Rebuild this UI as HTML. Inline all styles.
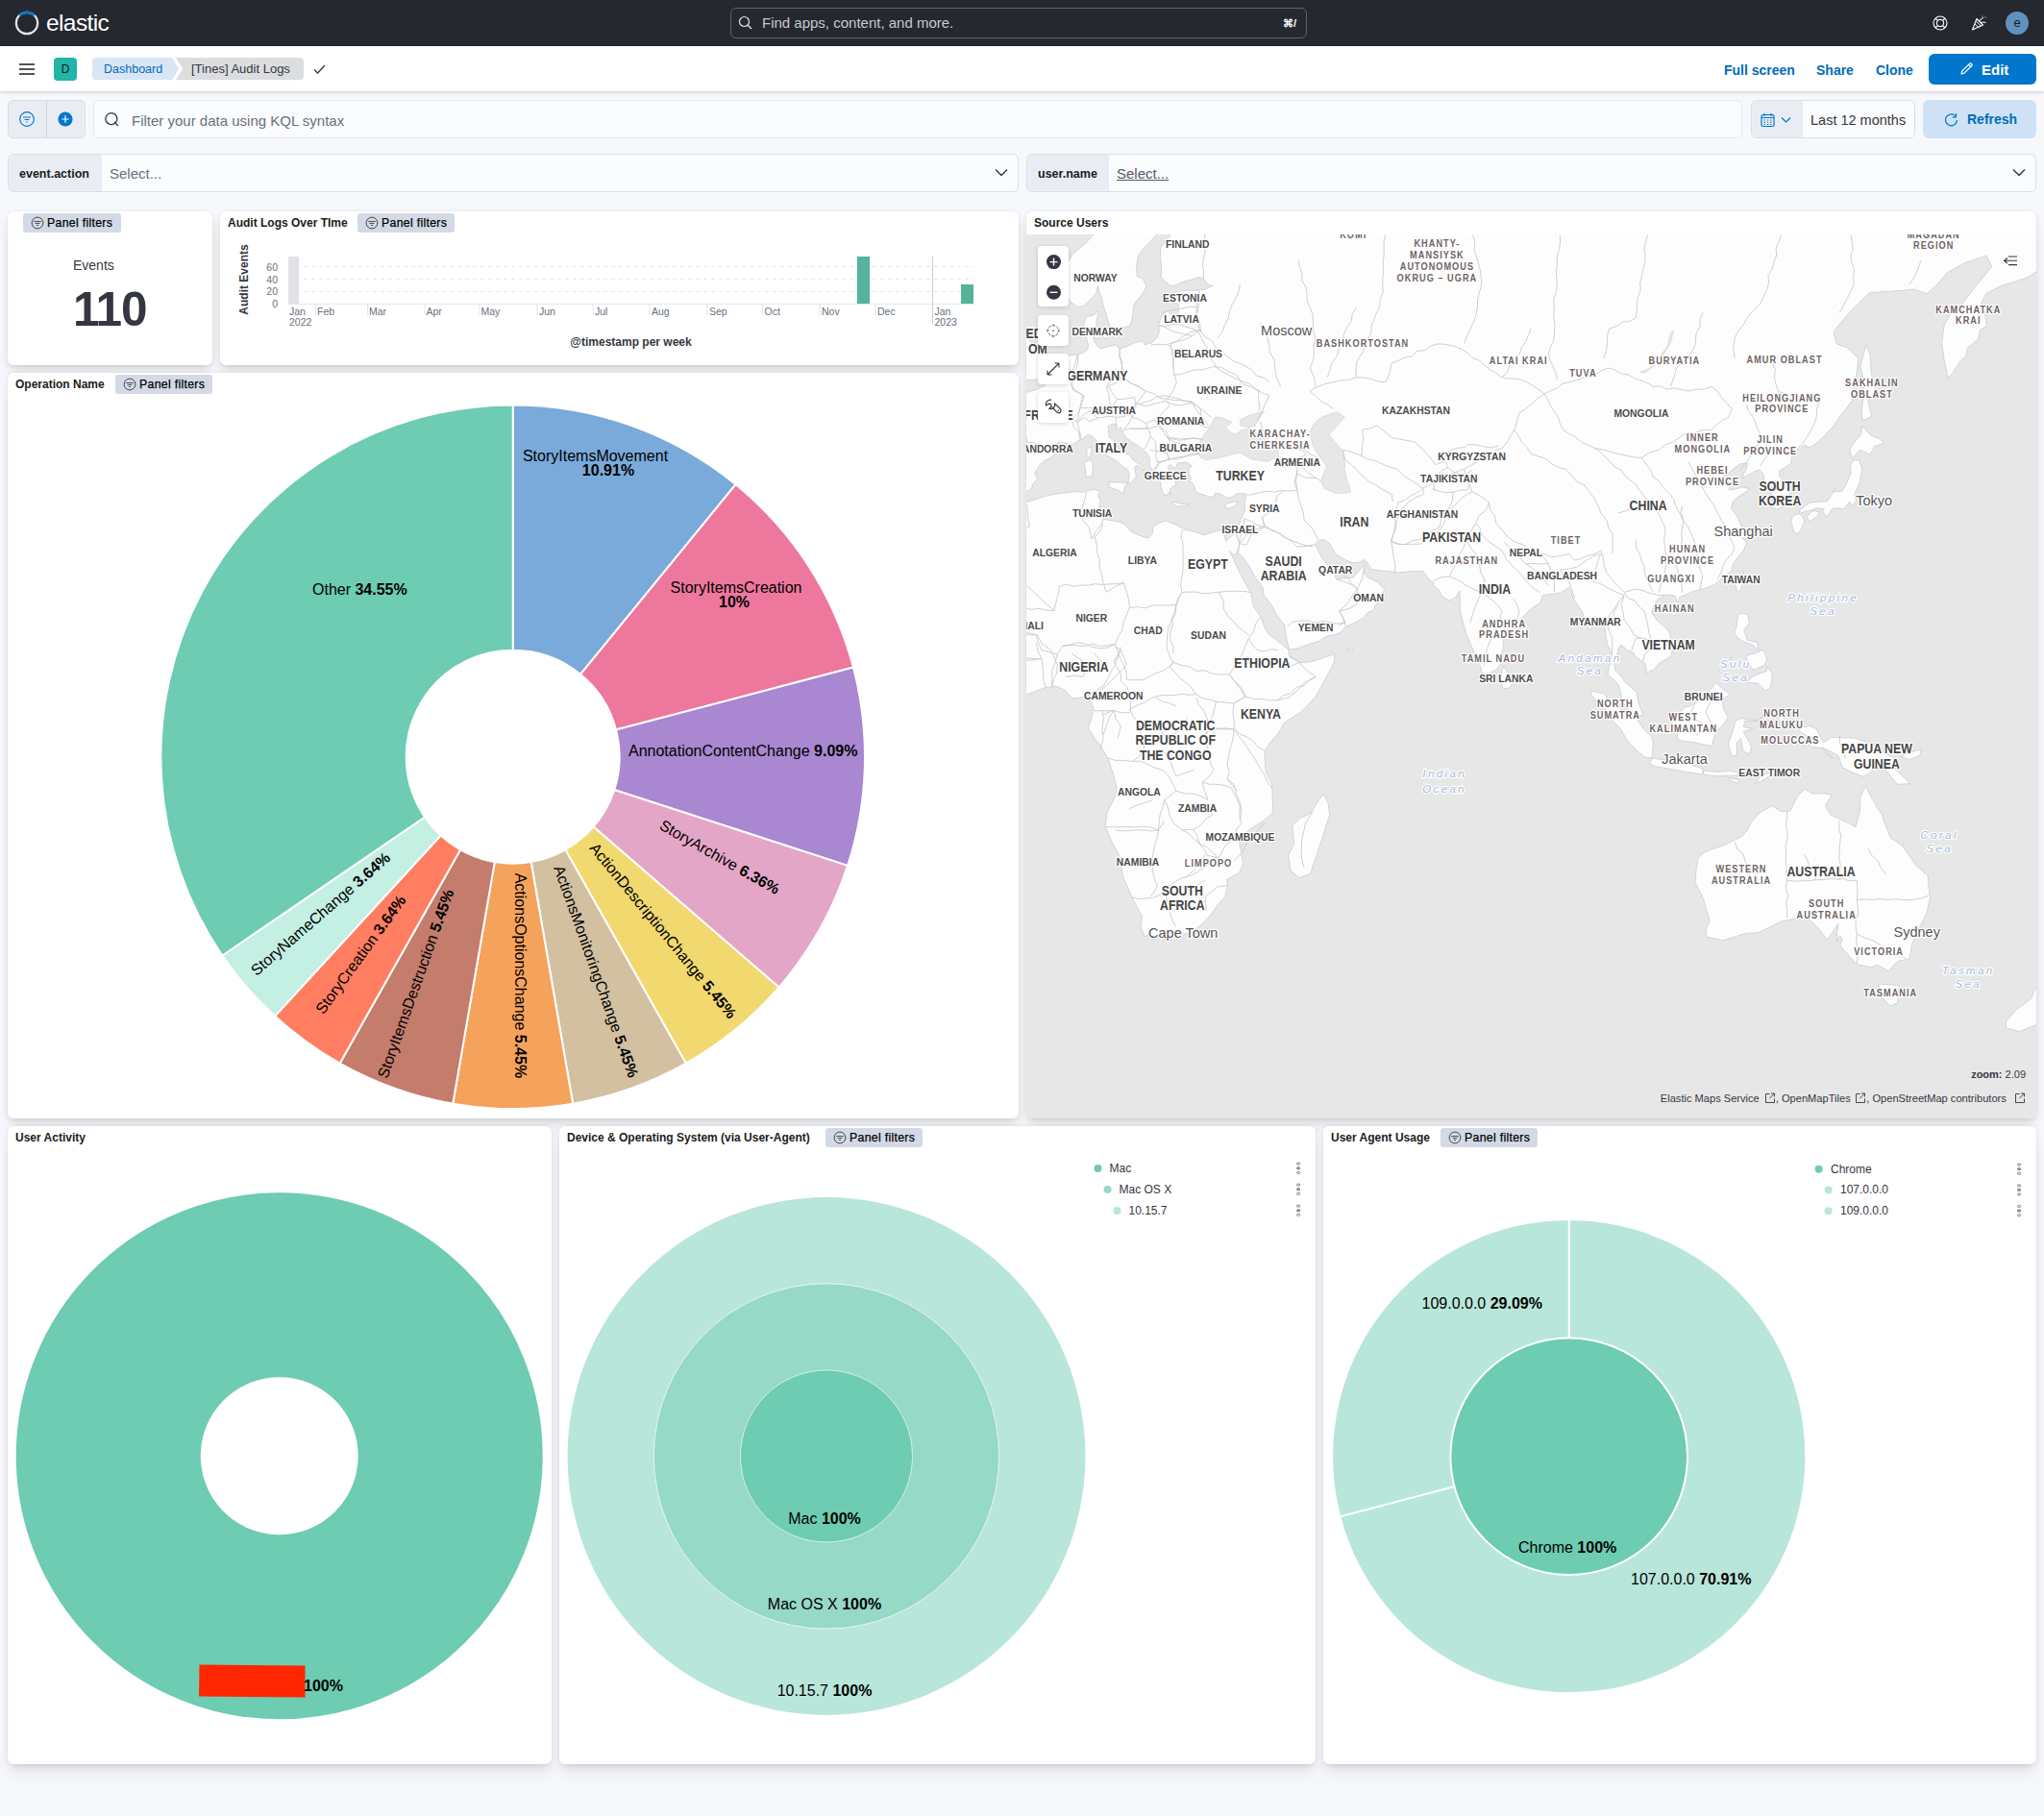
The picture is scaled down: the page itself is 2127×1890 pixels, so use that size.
<!DOCTYPE html><html><head><meta charset="utf-8"><title>[Tines] Audit Logs - Elastic</title><style>
*{box-sizing:border-box;margin:0;padding:0}
html,body{width:2127px;height:1890px;overflow:hidden;background:#f7f8fc;font-family:"Liberation Sans",sans-serif;color:#343741}
.abs{position:absolute}
.hdr{position:absolute;left:0;top:0;width:2127px;height:48px;background:#25282f}
.bc{position:absolute;left:0;top:48px;width:2127px;height:47px;background:#fff;box-shadow:0 1px 2px rgba(0,0,0,.12),0 2px 5px rgba(0,0,0,.06)}
.panel{position:absolute;background:#fff;border-radius:6px;box-shadow:0 0.9px 4px -1px rgba(0,0,0,.08),0 2.6px 8px -1px rgba(0,0,0,.06),0 5.7px 12px -1px rgba(0,0,0,.05),0 15px 15px -1px rgba(0,0,0,.04)}
.ptitle{position:absolute;font-size:12px;font-weight:bold;color:#1a1c21;white-space:nowrap;line-height:14px}
.badge{position:absolute;height:20px;background:#d3dae6;border-radius:3px;font-size:12px;color:#000;line-height:20px;white-space:nowrap}
.badge svg{position:absolute;left:8px;top:3px}
.badge span{position:absolute;left:25px;top:0;letter-spacing:0.3px;-webkit-text-stroke:0.25px #000;font-size:12.3px}
.t{position:absolute;white-space:nowrap}
</style></head><body>
<div class="hdr">
<svg class="abs" style="left:14px;top:10px" width="28" height="28" viewBox="0 0 28 28"><circle cx="14" cy="14" r="11.2" fill="none" stroke="#dfe5ef" stroke-width="2.2"/><path d="M6.08 6.08 A11.2 11.2 0 0 1 21.92 6.08" fill="none" stroke="#0077cc" stroke-width="2.4"/></svg>
<div class="t" style="left:48px;top:10px;font-size:24.5px;color:#fff;letter-spacing:-0.6px;line-height:28px">elastic</div>
<div class="abs" style="left:760px;top:8px;width:600px;height:32px;border:1px solid #5f636b;border-radius:6px;background:#25282f"></div>
<svg class="abs" style="left:768px;top:16px" width="16" height="16" viewBox="0 0 16 16"><circle cx="6.5" cy="6.5" r="5" fill="none" stroke="#dfe5ef" stroke-width="1.2"/><path d="M10.2 10.2 L14 14" stroke="#dfe5ef" stroke-width="1.3"/></svg>
<div class="t" style="left:793px;top:15px;font-size:15px;color:#c6cad1;line-height:17px">Find apps, content, and more.</div>
<div class="t" style="left:1335px;top:17px;font-size:11px;color:#fff;font-weight:bold;line-height:14px">&#8984;/</div>
<svg class="abs" style="left:2011px;top:16px" width="16" height="16" viewBox="0 0 16 16"><circle cx="8" cy="8" r="7" fill="none" stroke="#fff" stroke-width="1.1"/><circle cx="8" cy="8" r="3.6" fill="none" stroke="#fff" stroke-width="1.1"/><path d="M3 3L5.4 5.4M13 3L10.6 5.4M3 13L5.4 10.6M13 13L10.6 10.6" stroke="#fff" stroke-width="1.1"/></svg>
<svg class="abs" style="left:2051px;top:16px" width="17" height="16" viewBox="0 0 17 16"><path d="M1.5 15 L6 3.5 L12.5 10 Z" fill="none" stroke="#fff" stroke-width="1.1" stroke-linejoin="round"/><path d="M4 9 L8.5 13M5.2 6 L10.5 11.2" stroke="#fff" stroke-width="1"/><path d="M9 6 Q10 3 13 2.5M10.5 7.5 Q13 6.5 15.5 7.5" fill="none" stroke="#fff" stroke-width="1"/><circle cx="15" cy="2" r=".6" fill="#fff"/><circle cx="12" cy="1" r=".5" fill="#fff"/></svg>
<div class="abs" style="left:2087px;top:12px;width:24px;height:24px;border-radius:12px;background:#6092c0;color:#1a1c21;font-size:13px;text-align:center;line-height:24px">e</div>
</div>
<div class="bc">
<svg class="abs" style="left:20px;top:18px" width="16" height="12" viewBox="0 0 16 12"><path d="M0 1H16M0 6H16M0 11H16" stroke="#1a1c21" stroke-width="1.6"/></svg>
<div class="abs" style="left:56px;top:12px;width:24px;height:24px;border-radius:4px;background:#20b5a6;color:#1a1c21;font-size:12px;text-align:center;line-height:24px">D</div>
<svg class="abs" style="left:96px;top:12px" width="222" height="24" viewBox="0 0 222 24"><path d="M4 0H83L90 11.6L83 23.2H4Q0 23.2 0 19.2V4Q0 0 4 0Z" fill="#d9e6f5"/><path d="M87 0H216Q220 0 220 4V19.2Q220 23.2 216 23.2H87L94 11.6Z" fill="#dcdde0"/></svg>
<div class="t" style="left:108px;top:16px;font-size:12.5px;color:#006bb8;line-height:16px">Dashboard</div>
<div class="t" style="left:199px;top:16px;font-size:13px;color:#343741;line-height:16px">[Tines] Audit Logs</div>
<svg class="abs" style="left:326px;top:19px" width="13" height="10" viewBox="0 0 13 10"><path d="M1 5.5L4.5 9L12 1" fill="none" stroke="#343741" stroke-width="1.3"/></svg>
<div class="t" style="left:1794px;top:16.5px;font-size:14px;font-weight:bold;color:#006bb8;line-height:17px">Full screen</div>
<div class="t" style="left:1890px;top:16.5px;font-size:14px;font-weight:bold;color:#006bb8;line-height:17px">Share</div>
<div class="t" style="left:1952px;top:16.5px;font-size:14px;font-weight:bold;color:#006bb8;line-height:17px">Clone</div>
<div class="abs" style="left:2007px;top:8px;width:112px;height:32px;border-radius:6px;background:#0077cc"></div>
<svg class="abs" style="left:2039px;top:16px" width="15" height="15" viewBox="0 0 15 15"><path d="M2 13L2.8 10L10.5 2.3Q11.5 1.3 12.5 2.3L12.7 2.5Q13.7 3.5 12.7 4.5L5 12.2Z M9.5 3.3L11.7 5.5" fill="none" stroke="#fff" stroke-width="1.2" stroke-linejoin="round"/></svg>
<div class="t" style="left:2062px;top:16px;font-size:15px;font-weight:bold;color:#fff;line-height:17px">Edit</div>
</div>
<div class="abs" style="left:8px;top:104px;width:81px;height:40px;border:1px solid #d6dce7;border-radius:6px;background:#e9edf3"></div>
<div class="abs" style="left:48px;top:105px;width:1px;height:38px;background:#d0d6e1"></div>
<svg class="abs" style="left:20px;top:116px" width="17" height="17" viewBox="0 0 17 17"><circle cx="8" cy="8" r="7.3" fill="none" stroke="#0077cc" stroke-width="1.2"/><path d="M4 6H12M5.5 8.5H10.5M7.3 11H8.7" stroke="#0077cc" stroke-width="1.2"/></svg>
<svg class="abs" style="left:60px;top:116px" width="17" height="17" viewBox="0 0 17 17"><circle cx="8" cy="8" r="7.6" fill="#0077cc"/><path d="M8 4.3V11.7M4.3 8H11.7" stroke="#fff" stroke-width="1.2"/></svg>
<div class="abs" style="left:97px;top:104px;width:1716px;height:40px;border:1px solid #e3e8f0;border-radius:6px;background:#fbfcfd"></div>
<svg class="abs" style="left:108px;top:116px" width="17" height="17" viewBox="0 0 17 17"><path d="M12 12A6 6 0 1 1 12.3 11.7" fill="none" stroke="#343741" stroke-width="1.2"/><path d="M11 11L15 15" stroke="#343741" stroke-width="1.2"/></svg>
<div class="t" style="left:137px;top:117px;font-size:15px;color:#69707d;line-height:17px">Filter your data using KQL syntax</div>
<div class="abs" style="left:1822px;top:104px;width:171px;height:40px;border:1px solid #d9dfe8;border-radius:6px;background:#fbfcfd;overflow:hidden"><div class="abs" style="left:0;top:0;width:53px;height:38px;background:#e9edf3"></div></div>
<svg class="abs" style="left:1832px;top:117px" width="15" height="16" viewBox="0 0 15 16"><rect x="1" y="2.5" width="13" height="12" rx="1.5" fill="none" stroke="#0077cc" stroke-width="1.2"/><path d="M1 5.5H14M4 1V4M11 1V4" stroke="#0077cc" stroke-width="1.2"/><path d="M3.5 8H5M6.8 8H8.3M10 8H11.5M3.5 10.3H5M6.8 10.3H8.3M10 10.3H11.5M3.5 12.5H5M6.8 12.5H8.3M10 12.5H11.5" stroke="#0077cc" stroke-width="1.1"/></svg>
<svg class="abs" style="left:1853px;top:121px" width="11" height="8" viewBox="0 0 11 8"><path d="M1 1.5L5.5 6L10 1.5" fill="none" stroke="#0077cc" stroke-width="1.2"/></svg>
<div class="t" style="left:1884px;top:117px;font-size:14.5px;color:#343741;line-height:17px">Last 12 months</div>
<div class="abs" style="left:2001px;top:104px;width:118px;height:40px;border-radius:6px;background:#cfe2f5"></div>
<svg class="abs" style="left:2023px;top:117px" width="15" height="15" viewBox="0 0 15 15"><path d="M12.5 4.5A6 6 0 1 0 13.5 8" fill="none" stroke="#0077cc" stroke-width="1.2"/><path d="M12.5 1V4.8H8.8" fill="none" stroke="#0077cc" stroke-width="1.2"/></svg>
<div class="t" style="left:2047px;top:116px;font-size:14px;font-weight:bold;color:#006bb8;line-height:17px">Refresh</div>
<div class="abs" style="left:8px;top:160px;width:1052px;height:40px;border:1px solid #d9dfe8;border-radius:6px;background:#fbfcfd;overflow:hidden"><div class="abs" style="left:0;top:0;width:97px;height:38px;background:#e9edf3"></div></div>
<div class="t" style="left:20px;top:173.5px;font-size:12.5px;font-weight:bold;color:#1a1c21;line-height:15px">event.action</div>
<div class="t" style="left:114px;top:172px;font-size:15px;color:#69707d;line-height:17px">Select...</div>
<svg class="abs" style="left:1035px;top:175px" width="14" height="9" viewBox="0 0 14 9"><path d="M1 1.5L7 7.5L13 1.5" fill="none" stroke="#343741" stroke-width="1.4"/></svg>
<div class="abs" style="left:1068px;top:160px;width:1051px;height:40px;border:1px solid #d9dfe8;border-radius:6px;background:#fbfcfd;overflow:hidden"><div class="abs" style="left:0;top:0;width:85px;height:38px;background:#e9edf3"></div></div>
<div class="t" style="left:1080px;top:173.5px;font-size:12.5px;font-weight:bold;color:#1a1c21;line-height:15px">user.name</div>
<div class="t" style="left:1162px;top:172px;font-size:15px;text-decoration:underline;color:#535966;line-height:17px">Select...</div>
<svg class="abs" style="left:2094px;top:175px" width="14" height="9" viewBox="0 0 14 9"><path d="M1 1.5L7 7.5L13 1.5" fill="none" stroke="#343741" stroke-width="1.4"/></svg>
<div class="panel" style="left:8px;top:220px;width:213px;height:160px"></div>
<div class="panel" style="left:229px;top:220px;width:831px;height:160px"></div>
<div class="panel" style="left:1068px;top:220px;width:1051px;height:944px"></div>
<div class="panel" style="left:8px;top:388px;width:1052px;height:776px"></div>
<div class="panel" style="left:8px;top:1172px;width:566px;height:664px"></div>
<div class="panel" style="left:582px;top:1172px;width:787px;height:664px"></div>
<div class="panel" style="left:1377px;top:1172px;width:742px;height:664px"></div>
<div class="badge" style="left:24px;top:222px;width:102px"><svg width="14" height="14" viewBox="0 0 14 14"><circle cx="7" cy="7" r="5.9" fill="none" stroke="#343741" stroke-width="0.9"/><path d="M3.2 5.5H10.8M4.6 7.5H9.4M6 9.5H8" stroke="#343741" stroke-width="0.85"/></svg><span>Panel filters</span></div>
<div class="t" style="left:76px;top:268px;font-size:14px;color:#343741;line-height:17px">Events</div>
<div class="t" style="left:76px;top:295px;font-size:49.5px;font-weight:bold;color:#343741;line-height:54px;letter-spacing:-1.2px">110</div>
<div class="ptitle" style="left:237px;top:225px">Audit Logs Over TIme</div>
<div class="badge" style="left:372px;top:222px;width:101px"><svg width="14" height="14" viewBox="0 0 14 14"><circle cx="7" cy="7" r="5.9" fill="none" stroke="#343741" stroke-width="0.9"/><path d="M3.2 5.5H10.8M4.6 7.5H9.4M6 9.5H8" stroke="#343741" stroke-width="0.85"/></svg><span>Panel filters</span></div>
<svg class="abs" style="left:229px;top:244px" width="831" height="130" viewBox="229 244 831 130"><path d="M300 277.5H1013" stroke="#e3e6eb" stroke-width="1" stroke-dasharray="4 4"/><path d="M300 290.5H1013" stroke="#e3e6eb" stroke-width="1" stroke-dasharray="4 4"/><path d="M300 303.5H1013" stroke="#e3e6eb" stroke-width="1" stroke-dasharray="4 4"/><path d="M300 316.5H1013" stroke="#e6e9ee" stroke-width="1"/><rect x="300" y="267" width="11" height="49" fill="#e0e2e6"/><rect x="892" y="267" width="13" height="49" fill="#54b399"/><rect x="1000" y="296" width="13" height="20" fill="#54b399"/><path d="M328.5 317V328" stroke="#dfe3e8" stroke-width="1"/><path d="M382.5 317V328" stroke="#dfe3e8" stroke-width="1"/><path d="M442 317V328" stroke="#dfe3e8" stroke-width="1"/><path d="M499 317V328" stroke="#dfe3e8" stroke-width="1"/><path d="M559 317V328" stroke="#dfe3e8" stroke-width="1"/><path d="M617 317V328" stroke="#dfe3e8" stroke-width="1"/><path d="M676 317V328" stroke="#dfe3e8" stroke-width="1"/><path d="M736 317V328" stroke="#dfe3e8" stroke-width="1"/><path d="M793.5 317V328" stroke="#dfe3e8" stroke-width="1"/><path d="M853 317V328" stroke="#dfe3e8" stroke-width="1"/><path d="M911 317V328" stroke="#dfe3e8" stroke-width="1"/><path d="M970.5 267V338" stroke="#c9ccd2" stroke-width="1"/><text x="289" y="281.5" text-anchor="end" font-size="10.5" fill="#69707d">60</text><text x="289" y="294.5" text-anchor="end" font-size="10.5" fill="#69707d">40</text><text x="289" y="307" text-anchor="end" font-size="10.5" fill="#69707d">20</text><text x="289" y="319.5" text-anchor="end" font-size="10.5" fill="#69707d">0</text><text x="301" y="328" font-size="10.5" fill="#69707d">Jan</text><text x="330" y="328" font-size="10.5" fill="#69707d">Feb</text><text x="384" y="328" font-size="10.5" fill="#69707d">Mar</text><text x="443.5" y="328" font-size="10.5" fill="#69707d">Apr</text><text x="500.5" y="328" font-size="10.5" fill="#69707d">May</text><text x="561" y="328" font-size="10.5" fill="#69707d">Jun</text><text x="619" y="328" font-size="10.5" fill="#69707d">Jul</text><text x="678" y="328" font-size="10.5" fill="#69707d">Aug</text><text x="738" y="328" font-size="10.5" fill="#69707d">Sep</text><text x="795.5" y="328" font-size="10.5" fill="#69707d">Oct</text><text x="855" y="328" font-size="10.5" fill="#69707d">Nov</text><text x="913" y="328" font-size="10.5" fill="#69707d">Dec</text><text x="972.5" y="328" font-size="10.5" fill="#69707d">Jan</text><text x="301" y="338.5" font-size="10.5" fill="#69707d">2022</text><text x="972.5" y="338.5" font-size="10.5" fill="#69707d">2023</text><text transform="translate(257.5,291) rotate(-90)" text-anchor="middle" font-size="12" font-weight="bold" fill="#343741">Audit Events</text><text x="656.5" y="360" text-anchor="middle" font-size="12" font-weight="bold" fill="#343741">@timestamp per week</text></svg>
<div class="ptitle" style="left:16px;top:393px">Operation Name</div>
<div class="badge" style="left:120px;top:390px;width:101px"><svg width="14" height="14" viewBox="0 0 14 14"><circle cx="7" cy="7" r="5.9" fill="none" stroke="#343741" stroke-width="0.9"/><path d="M3.2 5.5H10.8M4.6 7.5H9.4M6 9.5H8" stroke="#343741" stroke-width="0.85"/></svg><span>Panel filters</span></div>
<svg class="abs" style="left:8px;top:410px" width="1052" height="754" viewBox="8 410 1052 754" font-family="Liberation Sans, sans-serif"><path d="M533.70 421.40A366.3 366.3 0 0 1 765.57 504.13L603.96 701.77A111 111 0 0 0 533.70 676.70Z" fill="#79aad9" stroke="#fff" stroke-width="2" stroke-linejoin="round"/><path d="M765.57 504.13A366.3 366.3 0 0 1 887.97 694.58L641.05 759.48A111 111 0 0 0 603.96 701.77Z" fill="#ee789d" stroke="#fff" stroke-width="2" stroke-linejoin="round"/><path d="M887.97 694.58A366.3 366.3 0 0 1 882.07 900.89L639.27 822.00A111 111 0 0 0 641.05 759.48Z" fill="#a987d1" stroke="#fff" stroke-width="2" stroke-linejoin="round"/><path d="M882.07 900.89A366.3 366.3 0 0 1 810.53 1027.58L617.59 860.39A111 111 0 0 0 639.27 822.00Z" fill="#e4a6c7" stroke="#fff" stroke-width="2" stroke-linejoin="round"/><path d="M810.53 1027.58A366.3 366.3 0 0 1 713.82 1106.65L588.28 884.35A111 111 0 0 0 617.59 860.39Z" fill="#f1d86f" stroke="#fff" stroke-width="2" stroke-linejoin="round"/><path d="M713.82 1106.65A366.3 366.3 0 0 1 596.16 1148.64L552.63 897.07A111 111 0 0 0 588.28 884.35Z" fill="#d2c0a0" stroke="#fff" stroke-width="2" stroke-linejoin="round"/><path d="M596.16 1148.64A366.3 366.3 0 0 1 471.24 1148.64L514.77 897.07A111 111 0 0 0 552.63 897.07Z" fill="#f5a35c" stroke="#fff" stroke-width="2" stroke-linejoin="round"/><path d="M471.24 1148.64A366.3 366.3 0 0 1 353.58 1106.65L479.12 884.35A111 111 0 0 0 514.77 897.07Z" fill="#c47c6c" stroke="#fff" stroke-width="2" stroke-linejoin="round"/><path d="M353.58 1106.65A366.3 366.3 0 0 1 286.02 1057.57L458.64 869.48A111 111 0 0 0 479.12 884.35Z" fill="#ff7e62" stroke="#fff" stroke-width="2" stroke-linejoin="round"/><path d="M286.02 1057.57A366.3 366.3 0 0 1 231.33 994.46L442.07 850.35A111 111 0 0 0 458.64 869.48Z" fill="#c4efe3" stroke="#fff" stroke-width="2" stroke-linejoin="round"/><path d="M231.33 994.46A366.3 366.3 0 0 1 533.70 421.40L533.70 676.70A111 111 0 0 0 442.07 850.35Z" fill="#6dccb1" stroke="#fff" stroke-width="2" stroke-linejoin="round"/><text x="619.5" y="479.6" text-anchor="middle" font-size="16" fill="#000">StoryItemsMovement</text><text x="633" y="495.2" text-anchor="middle" font-size="16" font-weight="bold" fill="#000">10.91%</text><text x="766" y="616.6" text-anchor="middle" font-size="16" fill="#000">StoryItemsCreation</text><text x="764" y="632.4" text-anchor="middle" font-size="16" font-weight="bold" fill="#000">10%</text><text x="654" y="786.6" font-size="16" fill="#000">AnnotationContentChange <tspan font-weight="bold">9.09%</tspan></text><text x="325" y="618.8" font-size="16" fill="#000">Other <tspan font-weight="bold">34.55%</tspan></text><text transform="translate(749.2,891.7) rotate(29.45)" y="5.85" text-anchor="middle" font-size="16" fill="#000">StoryArchive <tspan font-weight="bold">6.36%</tspan></text><text transform="translate(690.3,968.4) rotate(50.73)" y="5.85" text-anchor="middle" font-size="16" fill="#000">ActionDescriptionChange <tspan font-weight="bold">5.45%</tspan></text><text transform="translate(620.7,1010.9) rotate(70.36)" y="5.85" text-anchor="middle" font-size="16" fill="#000">ActionsMonitoringChange <tspan font-weight="bold">5.45%</tspan></text><text transform="translate(541.6,1015.4) rotate(90)" y="5.85" text-anchor="middle" font-size="16" fill="#000">ActionsOptionsChange <tspan font-weight="bold">5.45%</tspan></text><text transform="translate(432.2,1023.8) rotate(-70.36)" y="5.85" text-anchor="middle" font-size="16" fill="#000">StoryItemsDestruction <tspan font-weight="bold">5.45%</tspan></text><text transform="translate(375.1,993.3) rotate(-54)" y="5.85" text-anchor="middle" font-size="16" fill="#000">StoryCreation <tspan font-weight="bold">3.64%</tspan></text><text transform="translate(333.3,950.9) rotate(-40.91)" y="5.85" text-anchor="middle" font-size="16" fill="#000">StoryNameChange <tspan font-weight="bold">3.64%</tspan></text></svg>
<div class="ptitle" style="left:1076px;top:225px">Source Users</div>
<svg class="abs" style="left:1068px;top:244px" width="1051" height="920" viewBox="1068 244 1051 920" font-family="Liberation Sans, sans-serif"><defs><clipPath id="mc"><path d="M1068 244H2119V1158Q2119 1164 2113 1164H1074Q1068 1164 1068 1158Z"/></clipPath></defs><g clip-path="url(#mc)"><rect x="1068" y="244" width="1051" height="920" fill="#e7e7e7"/><path d="M1102.7 113.8L1140.3 241.7L1130.0 252.7L1116.0 264.7L1108.2 277.6L1108.8 291.3L1110.6 304.5L1112.4 312.8L1120.9 319.7L1127.5 318.5L1134.8 311.6L1140.3 305.7L1142.7 297.4L1144.5 305.7L1146.3 309.3L1147.5 316.2L1149.9 323.1L1152.4 332.0L1154.8 339.7L1156.6 346.2L1158.4 348.4L1164.5 348.4L1167.5 340.8L1174.8 339.7L1177.8 334.3L1179.0 325.3L1180.2 316.2L1185.1 310.4L1189.9 304.5L1192.9 297.4L1189.3 290.0L1183.3 287.6L1182.6 276.3L1184.5 266.0L1189.3 259.4L1198.4 250.0L1205.7 241.7L1213.5 221.7L1229.9 113.8ZM1229.9 223.2L1220.2 241.7L1213.5 250.0L1207.5 258.0L1207.5 268.6L1208.7 277.6L1208.1 288.8L1212.3 292.5L1217.2 297.4L1222.6 297.4L1229.9 293.7L1239.0 291.3L1246.8 288.8L1252.3 290.0L1257.1 296.1L1262.0 297.4L1254.1 301.0L1245.0 302.2L1234.7 302.2L1226.8 303.3L1220.8 305.7L1220.2 310.4L1221.4 315.1L1226.2 316.2L1226.2 324.2L1224.4 330.9L1218.4 327.6L1215.3 323.1L1208.7 328.7L1205.7 337.6L1206.3 345.1L1205.0 350.5L1200.8 354.7L1197.8 356.8L1191.1 358.9L1189.3 354.7L1180.2 356.8L1174.2 359.9L1165.1 363.0L1160.8 358.9L1152.4 361.0L1145.1 363.0L1140.9 358.9L1138.4 354.7L1137.2 347.3L1140.9 339.7L1140.9 335.4L1142.1 329.8L1142.7 323.1L1138.4 327.6L1130.6 329.8L1128.2 335.4L1127.5 341.9L1128.2 347.3L1130.6 352.6L1132.4 358.9L1131.8 364.1L1127.5 367.1L1120.9 369.2L1116.0 369.2L1108.8 371.2L1106.4 378.2L1103.3 384.1L1099.1 389.0L1093.6 391.9L1088.8 393.8L1088.2 400.5L1079.7 405.2L1069.4 408.0L1049.4 415.4L1063.4 429.8L1068.8 459.9L1030.1 459.9L1024.0 511.6L1044.6 519.1L1065.8 513.8L1073.7 507.8L1074.9 503.9L1079.7 497.7L1076.7 492.3L1081.5 484.4L1087.0 479.6L1091.8 477.2L1097.9 473.1L1097.3 468.2L1097.9 462.4L1102.7 459.9L1110.6 461.6L1115.4 463.3L1121.5 459.1L1126.9 456.6L1132.4 452.4L1137.8 454.9L1140.9 459.1L1142.7 464.9L1146.3 469.0L1153.0 474.7L1160.8 478.8L1164.5 482.0L1168.7 486.0L1173.0 488.3L1175.4 493.1L1174.8 498.5L1173.6 504.3L1178.4 500.8L1182.0 497.0L1182.0 493.1L1180.8 486.0L1183.3 484.4L1187.5 486.8L1189.9 489.9L1190.5 486.8L1186.9 483.6L1179.0 478.8L1176.0 473.1L1169.9 471.5L1164.5 467.4L1160.8 459.9L1154.2 454.9L1153.6 448.1L1153.0 443.8L1157.8 441.2L1162.1 442.1L1162.1 448.1L1166.3 444.7L1168.7 450.7L1171.1 454.9L1177.8 459.9L1184.5 464.1L1188.7 467.4L1194.2 472.3L1196.6 478.0L1196.0 484.4L1200.2 490.7L1203.8 497.0L1207.5 501.6L1208.1 507.0L1209.9 513.1L1214.1 516.1L1216.6 512.3L1218.4 515.3L1217.2 509.3L1220.8 506.2L1223.8 504.7L1223.2 500.8L1219.6 495.4L1217.2 491.5L1215.3 486.8L1217.2 483.6L1223.2 487.6L1225.6 482.0L1232.9 481.2L1236.5 482.0L1240.2 485.2L1237.1 488.3L1237.1 493.1L1239.6 498.5L1237.7 500.8L1242.6 504.7L1243.8 510.8L1248.0 513.8L1255.9 516.1L1259.5 517.6L1263.2 516.8L1264.4 513.1L1271.0 514.6L1276.5 518.3L1281.9 517.6L1285.6 514.6L1289.2 513.1L1294.1 513.8L1297.7 514.6L1295.9 518.3L1295.3 522.8L1295.9 530.2L1291.6 539.0L1289.8 544.7L1286.8 551.9L1285.6 554.0L1289.8 565.9L1288.6 575.6L1294.1 581.1L1299.5 588.5L1305.0 599.3L1314.0 611.8L1315.3 619.7L1323.1 629.4L1328.6 640.3L1336.4 649.8L1337.7 659.2L1339.5 668.0L1341.6 675.8L1351.0 674.8L1360.1 671.1L1372.2 667.4L1378.8 663.0L1394.6 658.6L1400.0 652.3L1409.1 648.5L1419.4 642.8L1423.6 637.1L1428.5 635.8L1433.3 626.8L1438.2 620.3L1440.6 613.1L1433.3 605.9L1423.6 601.3L1419.4 596.6L1420.0 587.9L1415.2 592.6L1412.1 596.6L1407.9 601.3L1396.4 601.9L1390.9 603.2L1388.5 597.9L1390.9 590.6L1388.5 589.2L1386.1 594.6L1382.5 589.9L1378.8 584.5L1374.6 579.0L1372.2 573.5L1368.5 566.6L1372.2 562.4L1378.2 561.7L1383.1 565.2L1386.1 570.1L1390.3 577.0L1400.6 583.1L1407.9 585.8L1415.2 585.2L1420.0 582.4L1424.8 588.5L1426.7 592.6L1437.0 593.9L1445.4 594.6L1455.7 595.9L1467.8 594.6L1480.6 594.6L1483.6 597.9L1487.2 603.2L1491.5 606.6L1492.7 610.5L1497.5 613.8L1499.3 619.0L1504.8 623.6L1509.0 624.9L1515.1 621.6L1518.7 615.1L1519.3 621.6L1519.3 628.1L1519.3 635.8L1522.3 647.3L1525.4 658.0L1530.2 670.5L1536.3 682.9L1539.9 692.1L1541.7 698.9L1548.1 703.9L1552.0 699.5L1557.5 696.4L1561.7 690.3L1561.7 682.9L1564.7 673.0L1563.5 662.4L1568.3 656.1L1576.2 651.7L1583.5 644.1L1592.6 633.9L1602.9 627.4L1605.3 619.7L1612.6 618.4L1621.0 617.7L1627.1 615.1L1632.5 611.2L1634.3 614.4L1636.8 622.3L1641.0 628.7L1646.5 636.4L1650.1 646.6L1653.1 655.5L1658.0 652.3L1665.2 651.7L1669.5 649.8L1670.7 659.9L1672.5 670.5L1676.1 678.0L1674.9 690.3L1673.1 702.6L1680.4 708.1L1684.6 713.6L1686.4 720.9L1688.2 728.8L1691.9 736.0L1699.7 742.1L1705.8 745.1L1710.0 744.5L1707.6 738.5L1704.6 729.4L1703.4 721.5L1697.9 716.0L1691.9 711.1L1686.4 703.2L1680.4 697.1L1679.8 688.5L1682.8 681.0L1684.0 676.1L1686.4 671.1L1689.4 673.0L1692.5 676.1L1699.1 678.6L1702.8 684.1L1708.8 688.5L1711.2 689.7L1713.1 695.2L1713.1 700.7L1721.5 696.4L1727.0 689.7L1734.3 686.0L1739.1 682.3L1740.3 676.1L1739.7 668.6L1737.9 659.9L1733.7 653.6L1724.6 646.0L1718.5 637.7L1722.1 628.1L1725.2 623.6L1732.4 619.7L1736.1 619.0L1742.7 619.7L1745.8 628.1L1747.6 621.6L1754.2 619.0L1761.5 615.7L1766.3 614.4L1770.6 613.1L1777.9 611.2L1785.1 607.9L1793.6 600.6L1802.1 593.9L1803.9 585.8L1809.3 579.0L1814.8 572.2L1817.8 563.8L1813.0 560.3L1816.6 556.1L1814.8 551.2L1811.2 545.5L1807.5 536.8L1801.5 529.5L1803.3 522.1L1808.1 517.6L1814.8 513.1L1820.8 508.5L1813.0 507.0L1804.5 509.3L1799.0 510.0L1800.3 505.5L1792.4 500.8L1791.8 495.4L1799.0 492.3L1803.3 488.3L1811.2 482.8L1818.4 482.0L1817.2 488.3L1814.2 493.9L1813.0 497.7L1819.0 494.6L1825.7 490.7L1831.1 489.1L1834.2 492.3L1836.0 497.7L1834.8 503.2L1842.0 506.2L1845.1 508.5L1843.2 513.1L1845.1 520.6L1843.9 528.0L1849.3 530.2L1855.4 527.3L1859.6 525.8L1862.6 519.1L1862.0 510.0L1857.2 501.6L1851.7 495.4L1851.7 489.9L1857.2 486.8L1863.8 482.0L1865.0 473.9L1869.9 469.0L1874.7 465.7L1877.2 463.3L1883.2 465.7L1889.9 461.6L1899.0 453.2L1908.0 443.0L1915.9 431.6L1927.4 417.2L1929.2 402.4L1932.3 388.0L1934.1 373.2L1928.6 368.1L1922.6 362.0L1911.1 357.8L1908.0 345.1L1915.9 335.4L1929.8 319.7L1945.6 304.5L1965.6 303.3L1980.7 302.2L1992.2 301.0L2004.9 305.7L2014.6 297.4L2026.1 283.9L2044.3 273.7L2067.3 266.0L2072.7 277.6L2059.4 293.7L2050.9 304.5L2041.9 316.2L2030.3 325.3L2023.1 338.6L2020.7 356.8L2023.1 375.2L2026.1 389.0L2027.3 393.8L2032.8 387.1L2038.8 377.2L2046.1 370.2L2047.3 362.0L2058.2 353.7L2060.6 343.0L2067.3 339.7L2065.5 325.3L2061.2 316.2L2066.7 305.7L2082.4 297.4L2098.8 292.5L2109.7 288.8L2128.4 276.3L2146.0 266.0L2162.3 251.3L2174.5 237.5L2228.9 113.8L1229.9 113.8ZM1275.9 563.1L1274.1 558.2L1274.1 554.0L1269.8 551.9L1262.6 553.3L1257.7 555.4L1252.3 556.8L1243.8 553.3L1232.9 551.2L1223.8 546.2L1212.9 541.9L1206.9 544.0L1200.2 547.6L1199.0 555.4L1194.8 560.3L1184.5 556.8L1176.6 553.3L1171.1 546.2L1165.1 543.3L1157.8 541.9L1148.7 540.4L1144.5 536.1L1139.7 534.6L1143.9 528.7L1145.1 521.3L1142.7 515.3L1145.1 510.8L1137.8 509.3L1126.9 512.3L1117.9 511.6L1105.7 513.1L1096.1 514.6L1085.8 516.8L1075.5 520.6L1066.4 522.8L1042.2 520.6L1018.0 562.4L975.6 629.4L987.7 692.1L1036.1 722.7L1065.8 723.9L1077.3 719.6L1088.2 715.4L1099.1 714.2L1108.2 718.4L1116.0 726.9L1128.2 725.7L1134.8 729.4L1137.8 736.0L1136.0 746.9L1132.4 757.8L1139.0 768.1L1147.5 779.7L1153.0 789.4L1158.4 805.3L1162.1 820.0L1160.2 829.9L1152.4 844.9L1149.9 859.4L1157.2 876.6L1165.1 891.6L1168.1 910.7L1177.8 933.8L1188.7 954.1L1186.9 964.1L1189.9 971.4L1190.3 974.8L1195.4 972.9L1199.6 978.2L1214.7 973.6L1233.5 972.1L1242.0 968.5L1250.5 962.0L1259.5 952.7L1266.8 942.2L1274.7 933.1L1277.7 921.5L1276.5 915.4L1289.8 908.1L1293.5 898.8L1291.6 886.3L1289.2 875.3L1300.1 863.2L1314.0 854.9L1324.3 846.1L1324.3 831.2L1323.7 816.3L1317.1 803.4L1316.5 794.3L1315.9 781.5L1321.9 772.4L1329.8 763.9L1336.4 752.4L1354.6 740.3L1369.1 725.1L1380.0 705.0L1388.5 689.1L1388.9 680.7L1378.2 684.1L1364.9 688.5L1352.8 689.7L1341.9 683.5L1340.7 676.1L1332.2 669.3L1320.1 659.9L1315.9 653.0L1312.2 642.2L1304.4 631.3L1301.9 617.1L1294.1 603.9L1288.0 591.9L1282.6 579.7L1278.9 573.5L1282.6 576.3L1285.9 578.0L1288.0 572.2L1289.8 565.9L1286.2 554.0ZM1060.3 312.8L1067.6 323.1L1062.8 341.9L1070.0 352.6L1076.1 359.9L1079.7 368.1L1086.4 374.2L1089.1 378.2L1086.4 384.1L1087.0 389.0L1086.4 391.9L1080.3 394.8L1066.4 395.8L1042.2 402.4L1042.2 312.8ZM1153.0 340.8L1154.8 345.1L1153.6 349.4L1150.6 352.6L1146.3 349.4L1145.1 345.1L1147.5 341.9ZM1140.9 346.2L1143.9 349.4L1142.7 352.6L1139.0 351.5L1137.8 347.3ZM1153.6 501.6L1173.0 502.4L1169.9 507.8L1169.9 513.8L1164.5 510.8L1154.8 507.0ZM1134.2 478.8L1137.2 481.2L1137.2 489.9L1136.0 495.4L1130.6 497.0L1129.4 489.1L1128.2 481.2ZM1135.4 464.1L1136.0 469.0L1134.2 477.2L1130.6 473.1L1131.2 467.4ZM1221.4 522.1L1229.9 524.3L1237.7 525.1L1232.9 526.9L1223.8 526.9L1220.8 524.3ZM1288.0 521.3L1278.3 523.6L1274.1 525.8L1278.3 529.5L1285.0 527.3ZM1564.1 693.4L1570.8 701.3L1574.4 710.5L1570.8 716.0L1564.1 716.6L1561.7 709.3L1562.3 701.3ZM1748.8 628.7L1750.6 632.6L1747.6 637.7L1741.5 640.9L1736.7 637.7L1739.7 631.3L1746.4 629.4ZM1814.2 594.6L1814.8 603.2L1812.4 610.5L1809.9 617.1L1806.9 613.1L1805.7 606.6L1810.5 598.6ZM1934.7 478.8L1937.7 488.3L1935.3 501.6L1929.8 515.3L1931.6 521.3L1925.6 527.3L1925.0 522.1L1921.4 526.5L1918.9 529.5L1911.1 528.7L1906.8 529.5L1900.8 538.2L1896.5 531.7L1898.3 529.5L1889.9 528.7L1883.8 531.7L1880.8 531.7L1871.7 534.6L1874.1 529.5L1883.8 522.8L1894.7 522.1L1902.0 521.3L1909.9 507.8L1906.8 512.3L1917.1 510.8L1920.8 504.7L1926.2 492.3L1925.6 484.4L1928.6 478.8ZM1871.7 534.6L1865.7 536.8L1863.8 542.6L1866.9 554.0L1869.9 555.4L1874.1 551.9L1877.8 541.9L1875.3 536.8ZM1886.8 531.7L1893.5 532.4L1891.1 537.5L1883.2 542.6L1880.2 538.2L1883.2 533.9ZM1937.7 443.0L1946.8 453.2L1955.3 456.6L1961.3 460.8L1950.4 464.9L1946.2 473.1L1935.3 468.2L1930.4 473.9L1926.8 477.2L1925.0 467.4L1928.6 461.6L1936.5 452.4ZM1942.5 358.9L1946.2 370.2L1947.4 388.0L1952.2 411.7L1943.8 415.4L1947.4 433.4L1938.9 437.7L1937.1 431.6L1938.9 412.6L1938.9 392.9L1935.9 381.2L1939.5 367.1ZM1809.9 638.4L1818.4 639.0L1820.2 648.5L1814.8 656.1L1818.4 666.1L1828.7 668.6L1829.9 676.1L1822.7 670.5L1814.8 668.0L1808.7 664.3L1804.5 658.0L1806.9 653.0L1808.7 640.9ZM1834.8 676.1L1839.0 686.0L1836.6 692.1L1825.1 697.1L1819.0 690.9L1817.2 682.3L1826.3 679.8ZM1838.4 693.4L1844.5 701.3L1842.6 714.8L1837.2 719.0L1829.3 711.1L1817.2 710.5L1825.1 703.2L1832.3 700.7L1838.4 698.3ZM1802.1 683.5L1799.0 692.1L1788.1 702.0L1786.9 700.7L1796.6 692.1L1800.9 684.1ZM1785.7 710.5L1793.6 717.8L1800.9 722.7L1792.4 727.5L1793.6 737.9L1798.4 746.9L1790.0 757.8L1785.7 760.9L1783.9 766.9L1780.9 776.6L1772.4 774.8L1762.7 772.4L1755.4 771.8L1746.4 770.6L1744.5 761.5L1739.7 753.0L1742.1 743.9L1746.4 743.3L1753.6 736.0L1762.7 733.6L1768.8 726.3L1774.8 722.7L1781.5 716.0L1785.1 711.1ZM1655.5 719.0L1668.9 721.5L1673.7 728.2L1683.4 735.4L1690.7 741.5L1702.2 746.9L1710.6 759.1L1719.1 767.5L1720.3 774.2L1719.1 788.8L1711.9 788.2L1701.6 779.7L1693.1 770.6L1686.4 758.4L1678.6 750.6L1673.1 739.7L1662.8 731.8L1655.5 722.7ZM1720.3 788.8L1725.2 790.0L1732.4 790.6L1736.1 793.7L1747.0 794.9L1750.6 791.8L1760.3 794.9L1761.5 796.7L1771.8 799.8L1771.8 805.9L1753.6 803.4L1738.5 800.4L1723.4 797.9L1716.1 794.3ZM1772.4 802.2L1780.9 802.8L1786.9 803.4L1799.0 802.2L1811.2 804.0L1823.3 802.8L1822.1 805.9L1805.1 807.1L1790.0 807.7L1777.9 807.1L1773.0 805.9ZM1849.3 803.4L1838.4 805.3L1830.5 809.6L1826.3 815.7L1832.3 813.2L1840.2 808.3ZM1799.0 809.6L1809.9 811.4L1807.5 815.1L1800.3 812.0ZM1836.6 744.5L1829.3 750.0L1811.2 747.6L1805.7 750.6L1803.9 758.4L1798.4 774.2L1802.1 787.0L1807.5 786.4L1807.5 772.4L1811.8 768.7L1813.6 781.5L1820.8 785.1L1822.7 777.2L1818.4 768.7L1814.2 761.5L1823.9 758.4L1814.2 756.6L1816.0 750.0L1826.3 750.6L1833.0 746.9ZM1853.5 739.7L1857.8 746.9L1853.5 751.2L1855.4 757.8L1851.1 749.4L1850.5 742.7ZM1853.5 770.6L1865.7 770.0L1870.5 774.2L1856.6 773.6ZM1841.4 771.8L1848.7 772.4L1846.3 776.0L1841.4 774.2ZM1872.9 757.8L1882.6 755.4L1889.9 758.4L1897.7 773.0L1905.0 767.5L1930.4 768.1L1941.3 771.8L1953.4 776.6L1961.3 784.5L1972.8 789.4L1974.0 793.7L1968.6 796.1L1974.0 802.2L1988.0 815.7L1974.6 816.3L1969.8 810.8L1963.1 802.2L1951.6 798.5L1945.6 804.7L1938.3 808.3L1926.2 803.4L1928.6 804.7L1917.1 798.5L1912.9 786.4L1899.0 779.1L1885.0 777.2L1877.8 770.6L1886.8 768.1L1877.2 764.5L1871.7 759.7ZM1999.5 779.7L1997.6 786.4L1986.8 790.6L1977.7 787.0L1986.8 783.3ZM1941.3 818.2L1947.4 829.9L1953.4 840.5L1958.3 848.0L1961.3 856.8L1967.4 872.1L1979.5 879.9L1988.0 892.2L1992.2 898.8L2001.9 908.1L2006.1 910.7L2007.3 925.6L2008.5 933.8L2004.9 950.6L1997.6 964.9L1994.6 971.4L1989.8 981.7L1986.8 998.2L1974.6 1000.5L1965.0 1010.6L1954.1 1004.4L1947.4 1006.7L1932.3 1003.6L1925.0 996.0L1914.7 983.9L1917.1 978.7L1914.7 973.6L1911.1 980.2L1911.7 971.4L1912.9 961.3L1901.4 978.0L1891.1 964.9L1883.8 957.7L1872.9 954.8L1853.5 959.1L1829.3 970.7L1816.6 971.4L1793.0 978.7L1776.0 975.1L1774.8 968.5L1779.1 957.7L1774.8 943.6L1772.4 935.2L1763.9 918.1L1765.1 904.7L1767.0 892.9L1774.8 886.3L1796.6 878.6L1813.0 870.2L1818.4 863.8L1823.3 854.3L1832.3 844.9L1844.5 838.6L1853.5 844.9L1863.2 843.6L1870.5 828.7L1877.8 821.2L1886.8 826.2L1899.0 825.6L1906.2 827.4L1899.6 838.6L1905.0 848.0L1921.4 855.6L1931.0 860.6L1935.3 844.9L1935.9 829.3ZM1954.7 1024.0L1976.5 1025.6L1974.6 1043.6L1967.4 1046.9L1958.3 1037.8ZM2124.2 1021.6L2116.6 1031.7L2113.7 1039.4L2098.8 1050.3L2087.3 1063.0L2087.3 1070.0L2101.8 1073.5L2138.1 1058.7L2144.2 1017.7ZM1377.0 826.2L1381.9 835.5L1383.7 848.0L1380.6 857.5L1374.6 876.6L1367.9 896.2L1363.7 909.4L1352.2 913.4L1343.1 906.1L1340.7 889.6L1346.7 878.6L1344.9 859.4L1353.4 851.2L1363.7 846.8L1371.0 834.9ZM1401.2 675.5L1408.5 676.1L1406.7 678.0L1401.8 677.3Z" fill="#fdfdfd" stroke="#c9d1dc" stroke-width="0.9"/><path d="M1254.7 478.8L1269.2 476.4L1284.4 472.3L1291.0 471.5L1302.5 478.0L1318.9 480.4L1330.4 475.5L1329.8 468.2L1318.9 459.1L1307.4 450.7L1300.1 445.5L1292.8 447.3L1286.2 451.5L1281.3 450.7L1275.3 444.7L1281.9 439.5L1271.0 434.2L1264.4 434.2L1258.3 445.5L1252.0 454.1L1247.4 462.4L1245.0 468.2L1248.6 475.5ZM1300.1 444.7L1291.0 443.0L1290.4 436.9L1299.5 432.5L1315.9 428.0L1309.8 436.0L1306.2 443.0ZM1387.3 429.8L1375.2 434.2L1367.9 440.4L1363.1 449.0L1366.1 464.1L1371.0 472.3L1380.6 485.2L1377.0 493.9L1374.6 500.8L1378.2 508.5L1390.3 513.8L1405.5 512.3L1404.9 507.8L1400.6 496.2L1399.4 488.3L1399.4 476.4L1396.4 468.2L1389.1 459.9L1383.1 451.5L1390.3 444.7L1399.4 434.2L1392.1 428.9ZM1741.5 344.1L1738.5 356.8L1729.4 371.2L1720.3 381.2L1711.9 388.0L1707.0 387.1L1715.5 384.1L1725.2 373.2L1734.9 361.0L1738.5 346.2Z" fill="#e7e7e7" stroke="#d0d0d0" stroke-width="0.6"/></g><g clip-path="url(#mc)"><path d="M1372.2 476.4L1364.3 472.8L1357.0 468.2L1349.5 467.6L1342.6 464.4L1334.9 464.6L1328.0 461.5L1320.7 459.9L1317.3 453.0L1313.3 446.3L1311.6 438.6M1387.3 425.4L1381.3 420.8L1374.3 417.4L1369.0 411.8L1363.1 407.1L1370.7 402.7L1378.8 399.6L1387.3 397.7L1395.3 395.8L1403.7 395.5L1411.5 392.9L1419.3 392.9L1426.8 394.4L1434.2 396.9L1441.8 397.7L1446.2 388.4L1447.9 378.2L1454.9 375.5L1461.6 372.1L1469.2 370.9L1475.0 365.2L1482.9 364.7L1489.1 360.1L1496.3 357.8L1504.6 358.5L1512.7 360.1L1520.5 363.0L1526.9 366.8L1532.0 372.4L1539.3 375.0L1544.6 380.3L1550.5 384.7L1557.1 388.3L1562.9 392.9L1572.0 394.0L1581.1 394.8L1588.3 397.4L1594.8 401.1L1601.1 405.3L1607.1 409.9M1607.1 409.9L1600.2 414.4L1594.2 420.0L1587.9 425.3L1581.1 429.8L1578.7 437.6L1576.8 445.5L1572.7 452.4L1568.9 459.3L1564.1 465.7L1556.9 468.7L1550.3 472.7L1544.2 477.8L1536.9 480.6L1530.3 484.5L1523.5 488.3L1525.2 496.5L1528.5 504.1L1532.0 511.6L1541.2 516.6L1549.6 522.8L1550.5 530.6L1555.6 537.0L1556.8 544.7L1563.1 551.7L1569.0 558.9L1576.1 564.0L1584.6 566.7L1591.7 571.9L1599.2 576.3L1607.1 576.6L1614.4 579.7L1623.5 578.5L1632.5 576.3L1638.6 583.1L1645.7 581.3L1652.3 578.2L1659.4 576.5L1665.8 572.9L1668.4 580.6L1669.3 588.8L1671.9 596.6L1677.7 603.4L1683.8 610.0L1690.1 616.4L1702.2 613.1L1709.8 614.6L1717.1 617.5L1724.6 619.4L1732.4 619.7M1607.1 409.9L1613.4 406.7L1620.0 404.2L1625.6 399.4L1632.5 397.7L1639.8 395.9L1646.8 393.3L1654.2 391.9L1661.1 389.0L1667.6 384.9L1674.9 383.1L1681.5 385.6L1687.7 389.1L1695.0 390.0L1700.9 394.0L1707.8 395.9L1714.3 398.5L1720.3 402.4L1727.8 401.9L1734.8 405.1L1742.3 404.0L1749.5 405.3L1756.7 407.1L1764.7 405.2L1773.0 405.1L1780.9 402.4L1787.2 407.2L1791.6 413.8L1796.7 419.7L1802.1 425.4L1799.0 434.2L1792.3 437.6L1786.3 442.1L1780.9 447.3L1771.6 447.5L1762.8 450.8L1753.6 451.5L1747.0 455.9L1740.2 460.2L1732.6 463.0L1726.4 468.2L1716.7 470.9L1708.2 476.4L1701.1 476.1L1694.2 474.6L1687.3 473.0L1680.4 471.6L1673.6 469.4L1666.8 467.7L1659.8 466.6L1652.7 463.4L1645.7 460.2L1639.7 455.2L1632.9 451.5L1626.5 447.3L1623.4 440.9L1621.3 434.1L1617.3 428.3L1613.6 422.3L1610.7 415.9L1607.1 409.9M1826.3 368.1L1835.1 373.7L1844.5 378.2L1847.4 385.1L1846.2 392.9L1848.1 400.0L1850.5 407.1L1857.3 410.2L1864.4 412.0L1871.8 412.7L1878.9 414.7L1886.2 415.8L1892.9 419.0L1890.5 426.0L1890.3 433.5L1888.3 440.6L1885.0 447.3L1880.5 454.8L1875.4 461.9L1869.3 468.2M1523.5 488.3L1516.6 490.7L1509.8 493.4L1502.3 493.9L1496.2 499.8L1488.8 504.1L1481.2 507.8L1475.3 512.6L1468.4 515.7L1462.4 520.4L1455.1 522.8L1452.5 530.8L1451.9 539.2L1451.9 547.6L1450.1 555.8L1447.9 563.8L1449.2 571.6L1450.1 579.5L1451.8 587.3L1451.5 595.3M1532.0 511.6L1525.4 515.3L1519.2 519.7L1514.4 525.6L1508.4 530.2L1505.0 537.5L1502.7 545.2L1498.1 551.9L1491.6 556.0L1484.3 558.2L1477.3 561.4L1469.6 562.7L1463.0 566.6L1455.2 566.3L1447.9 563.8M1549.6 522.8L1546.2 530.9L1539.1 536.7L1535.7 544.7L1530.4 553.5L1525.4 562.4L1523.0 570.4L1518.5 577.4L1516.6 585.6L1511.7 592.4L1508.4 599.9L1499.5 600.8L1491.5 604.6M1349.8 489.9L1348.6 500.0L1349.8 510.0L1351.3 518.4L1354.0 526.5L1356.3 533.7L1357.0 541.1L1362.2 546.2L1366.7 551.9L1372.2 562.4M1335.2 510.0L1326.5 512.1L1317.4 511.2L1308.6 513.1L1299.5 515.3M1293.5 539.0L1300.5 542.2L1307.2 546.0L1314.6 548.3L1321.3 550.6L1328.0 553.1L1333.7 557.7L1340.0 561.0L1346.6 563.4L1353.2 566.1L1360.1 568.0M1360.1 568.0L1366.1 568.7M1314.6 548.3L1302.5 551.9L1295.7 558.2L1290.4 565.9M1390.3 589.9L1395.2 596.2L1401.9 600.9L1406.6 607.4L1412.1 613.1L1407.8 619.1L1403.9 625.4L1399.2 631.1L1393.4 635.8L1397.3 641.8L1400.0 648.5L1392.1 649.1L1384.3 647.6L1376.4 646.5L1368.5 648.0L1360.7 646.2L1352.8 645.9L1344.9 647.3L1340.1 652.3M1230.5 551.2L1229.0 558.4L1230.8 565.7L1231.2 572.9L1231.1 580.2L1231.1 587.4L1231.0 594.7L1229.6 601.9L1228.7 609.1L1229.9 616.4L1225.9 622.4L1223.8 629.4L1215.8 630.0L1207.6 630.0L1199.5 630.0L1191.6 632.8L1183.4 631.5L1175.4 632.6L1174.6 623.6L1172.2 615.0L1169.3 606.6L1159.9 610.8L1151.2 616.4L1148.1 606.6L1146.5 598.6L1144.1 590.9L1144.5 582.6L1141.6 574.9L1141.5 566.7L1139.0 558.9L1144.9 552.7L1148.1 544.7M1229.9 616.4L1237.5 616.1L1245.1 616.1L1252.8 617.8L1260.4 617.1L1268.0 616.4L1276.5 615.3L1285.0 615.2L1293.5 615.3L1301.9 616.4M1229.9 616.4L1226.1 623.4L1223.9 631.0L1223.4 639.1L1218.8 645.9L1215.8 653.2L1214.7 661.1L1214.1 674.8L1217.0 682.2L1220.8 689.1L1217.2 694.6L1223.0 699.9L1227.9 705.9L1234.4 710.6L1240.1 716.0L1244.4 722.7L1251.0 726.5L1258.4 728.0L1265.6 730.0L1274.7 731.0L1283.8 731.8L1295.9 725.1L1295.3 722.1L1291.1 714.5L1284.6 708.8L1279.5 702.0L1285.6 692.1L1290.9 685.0L1294.1 676.7L1299.5 664.3L1304.5 657.4L1306.8 649.1L1311.6 642.2M1169.3 606.6L1162.0 607.7L1154.6 607.9L1147.2 608.5L1139.7 607.7L1132.4 609.2L1124.9 609.0L1117.6 610.3L1110.1 608.2L1102.7 609.8L1101.2 618.6L1098.8 627.2L1096.7 635.8L1088.8 635.0L1081.0 633.4L1073.0 634.4L1065.3 632.3L1057.3 633.1L1049.4 632.6M1175.4 632.6L1172.3 640.1L1169.3 647.7L1167.7 655.9L1163.4 663.0L1160.2 670.5L1152.5 671.8L1144.7 672.6L1136.9 670.3L1129.1 672.6L1121.3 671.9L1113.5 671.4L1105.7 672.4L1100.3 681.0L1092.2 678.7L1083.9 676.7L1080.7 669.1L1078.5 661.1L1069.4 660.4L1060.3 659.9M1160.2 670.5L1163.1 677.8L1165.5 685.3L1169.3 692.1L1172.1 699.6L1172.4 707.5L1181.4 707.7L1190.5 707.5L1196.6 703.7L1203.1 700.7L1209.9 698.3L1215.9 694.3L1220.8 689.1M1105.7 672.4L1114.8 670.5L1123.9 668.6L1130.9 670.9L1137.8 673.6L1145.1 674.8L1153.0 673.9L1160.2 670.5M1094.8 715.4L1094.7 706.5L1094.8 697.7L1097.9 689.5L1100.3 681.0M1130.0 725.7L1136.0 721.7L1142.1 717.6L1148.1 713.6L1152.7 706.7L1156.1 699.2L1160.2 692.1L1163.4 682.9L1166.3 673.6M1244.4 722.7L1236.9 723.3L1229.4 722.3L1222.0 723.6L1214.5 723.5L1207.0 723.8L1199.6 725.7L1191.9 730.7L1183.4 734.1L1175.4 738.5L1179.7 746.6L1186.3 753.0L1186.6 762.3L1190.3 771.0L1190.5 780.3L1185.3 787.2L1178.4 792.4L1169.7 791.4L1160.9 791.4L1152.4 788.8M1265.6 730.0L1263.8 737.9L1261.6 745.8L1257.7 753.0L1255.4 760.4L1254.1 768.1L1257.1 780.3L1258.3 787.6L1259.9 794.8L1263.2 801.6L1257.9 808.5L1251.1 813.9L1253.4 823.3L1257.1 832.4L1249.7 828.8L1242.0 826.2L1232.7 825.8L1223.8 823.1L1220.4 815.3L1216.2 808.0L1210.5 801.6L1201.7 799.1L1193.5 794.9L1186.2 792.2L1178.4 792.4M1223.8 823.1L1218.0 828.0L1211.7 832.4L1210.2 840.3L1207.1 847.8L1206.1 855.8L1205.7 863.8L1198.1 864.9L1190.5 864.0L1182.9 863.8L1175.4 864.3L1167.8 864.8L1160.2 863.8M1211.7 832.4L1215.3 840.1L1217.1 848.5L1220.8 856.2L1229.9 863.8L1237.2 867.4L1242.5 873.6L1249.1 878.2L1256.2 882.0L1262.0 887.6L1268.0 892.9M1268.0 892.9L1261.1 896.9L1254.7 901.6L1248.0 906.1L1241.0 910.7L1232.9 912.8L1225.4 915.8L1219.1 920.7L1212.1 924.6L1207.0 931.2L1199.6 934.5L1192.5 935.0L1185.4 935.5L1178.4 933.8M1251.1 813.9L1258.5 816.3L1266.4 816.2L1274.0 817.3L1281.3 820.0L1286.1 829.2L1290.4 838.6L1289.7 848.1L1291.6 857.5L1286.9 862.8L1284.4 869.7L1280.8 875.8L1274.8 880.3L1271.8 886.8L1268.0 892.9M1284.4 759.1L1290.3 764.1L1297.7 767.0L1304.1 771.4L1309.2 777.5L1315.9 781.5M1284.4 759.1L1284.1 750.0L1283.0 740.9L1284.4 731.8L1295.9 725.1M1295.9 725.1L1304.2 727.4L1312.8 727.4L1321.2 728.8L1329.8 728.8L1335.6 723.6L1343.5 721.6L1348.7 715.4L1356.6 713.5L1362.5 708.3L1369.1 704.4L1362.0 699.4L1355.6 693.5L1349.6 687.2L1341.9 682.9M1257.7 759.1L1266.6 758.3L1275.5 757.9L1284.4 759.1L1288.2 765.2L1292.9 770.8L1297.2 776.7L1301.0 782.9L1305.3 788.8L1308.8 795.1L1312.4 801.4L1316.4 807.5L1319.1 814.4L1323.7 820.0M1175.4 841.7L1183.2 838.0L1191.5 835.5L1199.6 832.4M1859.6 916.1L1858.6 908.9L1859.1 901.7L1858.1 894.6L1858.8 887.4L1858.0 880.2L1860.3 873.0L1859.8 865.8L1858.6 858.6L1859.5 851.4L1859.6 844.2M1859.6 916.1L1858.2 924.0L1860.9 931.9L1858.6 939.8L1859.8 947.7L1859.6 955.5M1914.1 916.1L1914.1 908.4L1915.2 900.7L1913.7 892.9L1914.1 885.2L1914.7 877.5L1915.6 869.8L1913.6 862.0L1914.1 854.3M1859.6 916.1L1866.9 917.2L1874.1 916.8L1881.4 916.6L1888.7 915.8L1895.9 915.6L1903.2 914.7L1910.5 914.9L1917.7 914.7L1925.0 916.9L1932.3 916.1L1933.0 926.4L1932.3 936.6L1933.3 943.7L1933.6 950.8L1931.2 957.9L1931.1 965.0L1932.3 972.1L1931.7 979.8L1933.0 987.5L1933.1 995.2L1932.3 1002.8M1932.3 936.6L1940.3 935.9L1948.4 936.5L1956.5 935.5L1964.5 936.4L1972.6 935.8L1980.7 936.6L1990.0 936.4L1999.1 934.9L2007.9 931.8M1932.3 972.1L1940.3 975.9L1948.7 978.7L1956.5 983.2L1962.6 988.2L1970.4 990.2L1977.1 994.1L1983.7 998.2M1599.2 576.3L1606.3 580.2L1611.3 586.5L1603.3 586.9L1595.2 586.6L1587.1 586.5L1581.5 580.8L1575.2 575.8L1570.3 569.5L1564.7 563.8M1611.3 586.5L1614.4 596.6L1617.4 606.3L1617.4 616.4M1623.4 593.2L1628.1 599.5L1632.6 605.8L1635.6 613.1L1638.6 622.9M1665.8 576.3L1663.1 583.2L1661.1 590.4L1658.1 597.1L1653.7 603.2L1661.2 606.0L1668.6 609.0L1675.4 613.3L1682.8 616.5L1690.1 619.7L1684.9 625.6L1680.6 632.2L1675.9 638.5L1671.9 645.4L1673.8 655.2L1677.9 664.3L1677.7 673.6L1677.3 682.9L1676.1 692.1M1690.1 616.4L1694.3 622.4L1701.4 625.3L1705.5 631.5L1711.2 635.8L1714.3 648.5L1715.9 658.1L1718.5 667.4L1716.8 675.2L1711.5 681.4L1709.4 689.1M1718.5 667.4L1710.6 664.6L1702.2 664.3L1697.9 676.7M1169.3 447.3L1174.2 441.0L1178.4 434.2L1181.4 420.9L1189.2 419.3L1196.9 417.2L1203.8 412.9L1211.7 411.7L1218.8 413.4L1225.9 414.9L1232.8 417.6L1240.2 418.1L1243.8 424.9L1248.1 431.1L1253.1 436.9L1257.7 443.0M1220.8 383.1L1221.0 374.6L1219.4 366.2L1217.8 357.8L1224.9 354.9L1231.0 350.2L1237.5 346.2L1245.0 344.1L1249.6 350.0L1252.5 356.9L1256.7 363.0L1258.2 370.6L1262.5 376.7L1266.2 383.1L1272.8 387.1L1279.6 390.6L1286.4 394.4L1293.5 397.4L1301.0 399.6L1306.6 405.4L1313.5 408.8L1320.7 411.7L1317.7 418.4L1314.5 425.1L1311.2 431.7L1308.6 438.6M1169.3 392.9L1166.9 385.6L1168.0 377.8L1165.4 370.6L1165.1 363.0M1169.3 392.9L1160.9 398.8L1151.2 402.4L1153.9 409.6L1154.5 417.3L1157.2 424.5L1150.3 426.3L1143.0 425.5L1136.0 427.1L1127.5 431.7L1120.9 438.6L1122.9 429.6L1124.6 420.6L1126.9 411.7L1120.8 407.1L1114.8 402.4L1115.4 395.2L1114.8 388.0L1118.7 379.4L1120.9 370.2M1181.4 420.9L1187.2 414.2L1192.3 407.1L1184.9 402.0L1176.3 398.8L1169.3 392.9M1248.0 472.3L1240.9 470.0L1234.4 466.4L1228.4 461.7L1221.1 459.6L1214.7 455.7L1210.4 449.2L1205.7 443.0L1198.6 445.4L1191.3 446.1L1183.9 446.3L1176.5 445.8L1169.3 447.3M1251.7 457.4L1244.3 456.5L1236.9 456.2L1229.5 457.1L1222.1 456.0L1214.7 455.7M1248.0 472.3L1240.2 473.8L1232.3 475.2L1224.6 477.8L1216.6 478.0L1205.7 482.0L1199.6 489.9M1248.0 302.2L1246.0 309.8L1247.4 317.7L1245.6 325.3L1245.3 333.8L1248.0 341.9L1253.0 349.9L1261.3 355.0L1266.2 363.0L1272.3 366.8L1277.8 371.6L1283.6 375.8L1290.5 378.3L1296.9 381.6L1303.0 385.3L1307.8 391.2L1315.1 393.0L1320.7 397.7M1252.3 290.0L1252.6 282.9L1251.3 275.7L1252.7 268.6L1254.2 261.4L1251.6 254.2L1253.9 247.1L1253.1 239.9L1254.4 232.8L1253.9 225.6L1252.5 218.4L1254.7 211.3L1253.5 204.1L1252.1 196.9L1252.2 189.7L1253.9 182.6L1253.8 175.4L1254.1 168.3M1196.6 468.2L1205.8 469.6L1214.7 472.3L1216.6 479.6M1108.8 378.2L1114.8 388.0M1068.8 459.9L1076.2 460.9L1083.2 463.6L1090.3 465.6L1097.3 468.2M1115.4 436.9L1117.3 444.1L1122.6 450.0L1123.9 457.4M1257.7 753.0L1255.3 745.8L1252.4 738.9L1247.1 733.1L1245.0 725.7M1147.5 743.9L1159.0 739.1L1154.1 747.0L1151.1 755.8L1148.1 764.5M1165.1 363.0L1164.7 370.8L1166.9 378.2L1168.8 385.4L1169.3 392.9L1178.4 399.6L1185.6 403.0L1192.3 407.1L1199.9 409.5L1206.7 414.1L1214.7 415.4L1223.0 416.6L1231.3 416.8L1239.6 418.1L1249.3 425.4L1254.8 429.6L1260.2 434.2M1197.8 358.9L1206.9 358.2L1215.9 358.9L1220.8 364.1L1222.2 371.1L1220.8 378.2L1221.4 388.0L1224.4 397.7L1220.7 407.1L1214.7 415.4M1205.7 338.6L1212.8 339.4L1219.7 337.2L1226.8 337.6L1239.6 341.9L1249.3 345.1L1248.5 334.9L1245.0 325.3L1245.6 319.7L1246.0 311.4L1248.0 303.3M1209.3 325.3L1216.4 323.1L1223.8 322.4L1231.1 320.8L1238.3 319.2L1245.6 319.7M1205.7 338.6L1212.8 340.4L1219.3 344.3L1226.4 346.3L1233.5 348.2L1240.8 349.4M1216.6 357.8L1224.8 355.4L1233.1 353.5L1240.8 349.4L1249.3 341.9M1221.4 390.0L1229.0 389.7L1236.0 386.9L1243.2 385.1L1252.4 384.8L1261.2 381.7L1270.4 382.2L1278.3 386.7L1286.8 390.0L1292.8 399.6L1301.4 402.7L1309.8 406.1L1309.6 415.4L1311.0 424.5L1309.8 428.0M1122.1 368.1L1120.9 381.2L1114.8 392.9L1116.6 406.1L1128.2 411.7L1124.5 424.5L1136.6 424.5L1146.9 425.4L1157.2 425.4L1162.1 415.4L1156.6 407.8L1152.4 399.6L1160.0 394.9L1168.7 392.9M1136.6 424.5L1136.6 429.8L1142.1 435.1L1154.2 433.4L1161.5 434.2L1169.0 433.8L1176.0 430.7L1182.0 423.6L1181.4 419.9L1180.8 413.6L1168.7 415.4L1162.1 415.4M1124.5 424.5L1120.9 431.0L1115.4 436.0L1120.9 439.5L1129.4 434.2L1133.0 438.6L1142.1 435.1M1120.9 439.5L1122.8 446.7L1124.5 454.1L1123.9 457.4M1161.5 434.2L1160.8 443.0M1181.4 419.9L1192.3 422.7L1202.6 419.9L1212.9 417.2L1217.2 421.8L1212.3 427.2L1207.1 432.3L1201.4 436.9L1192.3 440.4L1185.4 436.6L1177.8 434.2L1176.0 430.7M1212.9 417.2L1220.7 421.0L1229.3 421.8L1240.2 419.0L1249.3 425.4L1250.0 434.2L1249.3 443.0L1258.3 445.5M1201.4 436.9L1208.7 445.5L1214.7 450.7L1215.9 455.7L1226.8 458.3L1234.5 457.5L1242.0 455.7L1251.7 457.4M1215.9 455.7L1217.8 462.4L1214.1 469.8L1216.6 478.0L1224.6 476.1L1232.9 475.5L1239.6 472.3L1248.0 472.3M1192.3 440.4L1194.2 446.4L1196.0 448.1L1197.2 454.1L1193.5 463.3L1190.5 467.4M1177.2 446.4L1185.4 446.1L1193.5 445.5M1197.2 454.1L1202.6 459.9L1203.2 469.8L1202.6 472.3L1203.2 478.0L1205.7 482.0L1203.8 486.8L1199.6 491.5M1214.1 469.8L1203.2 469.8M1216.6 478.0L1204.4 481.2M1329.8 475.5L1341.9 478.8L1349.8 487.6L1349.8 493.1L1346.7 501.6L1349.8 510.0L1342.5 510.8L1335.2 510.8M1341.9 478.8L1351.0 477.2L1359.5 473.1L1354.6 468.2L1345.9 467.2L1337.4 465.1L1329.0 462.9L1320.7 459.9M1351.0 477.2L1354.7 485.1L1360.7 491.5L1369.1 497.0L1374.6 500.8M1349.8 493.1L1358.2 497.0L1369.1 497.7M1335.2 510.8L1328.6 516.8L1326.1 530.2L1319.8 534.2L1313.4 538.2L1315.3 546.2M1313.4 538.2L1315.9 548.3L1309.6 552.7L1302.5 555.4L1297.1 567.3L1290.4 565.9M1294.1 540.4L1294.7 542.6L1293.5 551.9L1290.4 558.6L1289.8 565.9M1315.3 546.2L1323.3 552.2L1332.8 555.4L1338.4 559.7L1344.4 563.4L1349.2 568.7L1360.1 568.7L1368.5 566.6M1390.9 603.2L1398.6 605.4L1406.0 608.2L1412.7 612.5L1412.6 621.0L1411.5 629.4L1402.9 633.8L1393.4 635.8L1397.5 643.1L1400.0 651.1M1400.0 646.6L1393.4 651.1M1419.4 590.6L1417.6 601.9L1412.7 612.5M1397.6 468.2L1407.5 470.7L1417.0 474.7L1417.4 465.6L1418.6 456.4L1417.6 447.3L1425.4 445.9L1432.7 443.0L1440.8 449.1L1448.5 455.7L1456.4 456.9L1464.2 458.6L1472.1 459.9L1478.2 465.7L1484.2 471.6L1489.6 478.0L1493.9 483.6L1504.2 479.6L1507.8 469.8L1515.3 466.4L1523.5 465.7L1527.8 462.4L1536.4 463.0L1544.7 464.9L1552.1 466.0L1559.3 464.1M1417.0 474.7L1423.6 478.0L1431.6 479.4L1438.8 483.2L1446.2 486.1L1453.9 488.3L1461.1 495.5L1469.7 500.8L1481.2 508.5M1424.8 501.6L1432.0 504.7L1438.2 509.3L1448.5 514.6L1449.1 522.1M1397.6 468.2L1398.8 478.0L1404.5 482.2L1409.8 486.8L1414.6 491.9L1419.8 496.8L1424.8 501.6M1504.2 479.6L1506.6 486.8L1513.2 491.5L1524.1 493.9L1531.4 489.9M1506.6 486.8L1499.4 490.3L1493.9 496.2L1492.2 503.4L1492.7 510.8M1532.0 500.1L1526.6 510.0L1519.1 510.0L1512.0 512.3L1504.5 512.6L1497.2 511.3L1490.2 508.5M1481.2 508.5L1481.2 514.6L1473.3 517.7L1466.0 522.1L1457.5 530.9L1453.6 540.7L1452.1 551.2L1447.2 563.1L1456.9 566.6L1464.6 566.3L1472.3 566.4L1479.9 565.9L1483.2 558.7L1489.0 553.3L1498.1 548.3L1499.9 541.0L1502.3 533.9L1508.0 528.4L1511.4 521.3L1512.0 511.6M1435.7 319.7L1432.3 325.9L1429.8 332.4L1427.1 338.9L1426.8 346.3L1423.6 352.6L1421.7 359.5L1418.6 365.9L1414.5 371.8L1411.5 378.2L1410.9 385.5L1411.5 392.9M1441.8 244.5L1440.0 251.8L1440.2 259.2L1440.0 266.6L1439.2 274.0L1439.8 281.4L1439.0 288.8L1438.8 296.1L1439.2 304.2L1435.9 311.7L1435.7 319.7M1532.6 244.5L1534.8 251.7L1533.9 259.5L1536.1 266.7L1538.4 273.9L1540.3 281.2L1541.2 288.6L1541.7 296.1L1539.5 304.1L1537.5 312.1L1537.5 320.6L1535.8 328.7L1532.6 336.5L1529.5 343.6L1526.3 350.6L1523.5 357.8M1593.2 341.9L1590.5 348.6L1587.9 355.4L1583.8 361.4L1581.1 368.1L1572.0 378.2L1568.8 386.4L1562.9 392.9M1623.4 244.5L1623.5 252.0L1622.4 259.5L1620.2 266.9L1620.6 274.5L1619.2 282.0L1619.9 289.6L1620.1 297.2L1619.4 304.7L1616.5 312.0L1617.4 319.7L1616.7 328.9L1618.0 338.1L1617.4 347.3L1616.8 354.7L1613.4 361.2L1611.3 368.1L1613.1 375.0L1616.1 381.4L1618.9 387.9L1620.4 394.8M1714.3 244.5L1712.7 251.6L1710.9 258.7L1712.1 266.2L1711.7 273.5L1709.7 280.6L1708.5 287.7L1706.6 294.8L1707.2 302.2L1704.3 309.2L1703.4 316.4L1703.2 323.7L1702.2 330.9L1695.7 334.6L1688.0 335.0L1682.0 339.7L1674.9 341.9L1672.4 349.5L1672.7 357.7L1671.3 365.5L1668.9 373.2M1771.8 325.3L1769.2 332.7L1768.8 340.6L1764.9 347.6L1764.5 355.5L1762.7 363.0L1757.4 370.4L1751.3 377.0L1744.5 383.1L1741.8 392.9L1738.5 402.4M1853.5 244.5L1851.0 251.4L1848.1 258.2L1848.6 266.0L1845.8 272.8L1844.3 280.1L1840.0 286.5L1840.5 294.3L1838.8 301.4L1835.4 308.1L1832.2 315.2L1827.0 321.0L1821.3 326.4L1817.1 332.8L1813.1 339.5L1808.1 345.3L1805.1 352.6L1803.7 362.9L1805.1 373.2M1926.2 244.5L1927.2 251.8L1928.1 259.2L1926.1 266.7L1927.1 274.0L1929.9 281.3L1928.3 288.8L1929.2 296.1L1925.8 303.6L1922.0 310.9L1918.4 318.3L1914.1 325.3M1998.9 271.2L1995.8 280.0L1992.2 288.5L1986.8 296.1M1311.6 336.5L1315.3 343.3L1318.1 350.5L1320.7 357.8L1321.3 366.6L1325.9 374.4L1326.8 383.1L1328.4 393.2L1332.8 402.4M1290.4 296.1L1288.9 303.4L1286.0 310.2L1282.2 316.7L1279.8 323.6L1278.3 330.9L1274.5 338.3L1271.5 346.1L1266.2 352.6M1351.0 271.2L1352.8 278.1L1354.8 284.9L1354.9 292.3L1358.8 298.6L1360.0 305.7L1360.1 313.0L1363.1 319.7L1366.1 327.6L1366.4 336.1L1366.6 344.5L1369.1 352.6L1366.8 360.1L1367.6 368.2L1366.1 375.8L1363.1 383.1L1367.4 392.4L1369.1 402.4M1411.5 319.7L1407.3 326.4L1406.2 334.4L1401.7 341.0L1398.2 348.1L1396.9 356.0L1393.4 363.0L1391.0 370.8L1385.9 377.4L1383.9 385.3L1381.2 392.9M1575.0 447.3L1580.2 453.1L1583.5 460.2L1589.1 465.7L1593.2 472.3L1600.7 474.9L1608.3 477.3L1614.6 482.7L1621.7 486.4L1629.5 488.3L1635.3 494.5L1640.6 501.0L1648.7 504.7L1653.7 511.6L1659.0 518.5L1662.9 526.3L1666.1 534.5L1671.9 541.1L1673.6 548.8L1677.9 555.4L1678.3 565.9L1677.9 576.3M1659.8 466.6L1665.6 470.6L1670.5 475.7L1675.7 480.6L1680.1 486.3L1686.9 489.2L1690.9 495.3L1696.4 499.8L1702.2 503.9L1705.9 510.2L1710.6 515.8L1715.5 521.1L1720.3 526.5L1724.8 533.5L1728.9 540.8L1732.4 548.3L1732.9 555.3L1731.5 562.4L1732.4 569.4L1733.8 578.5L1733.4 587.5L1732.4 596.6L1728.6 606.3L1726.4 616.4M1708.2 476.4L1712.9 482.5L1717.5 488.9L1720.3 496.2L1726.7 500.9L1730.8 507.8L1736.6 513.0L1741.5 519.1L1743.9 527.1L1748.0 534.3L1751.5 541.7L1756.7 548.3L1759.6 555.1L1762.5 561.9L1764.7 568.9L1765.7 576.3L1767.8 584.2L1769.1 592.2L1771.8 599.9L1768.8 613.1M1756.7 480.4L1760.8 488.2L1765.5 495.7L1768.8 503.9L1774.0 511.3L1778.5 519.2L1783.9 526.5L1787.5 534.1L1791.3 541.4L1796.0 548.3L1798.0 555.8L1801.6 562.6L1805.1 569.4L1802.1 576.8L1796.1 582.5L1793.0 589.9L1790.6 596.8L1786.9 603.2M1835.4 455.7L1829.1 463.9L1823.3 472.3L1817.5 480.6L1811.2 488.3M1817.2 420.9L1819.5 427.8L1824.1 433.7L1827.0 440.3L1829.3 447.3L1834.1 455.2L1838.4 463.5L1841.4 472.3L1835.9 477.6L1832.3 484.4M1684.0 533.9L1692.1 531.7L1700.0 528.4L1708.2 526.5L1714.1 522.5L1720.3 519.1M1702.2 562.4L1702.7 569.8L1706.2 576.2L1708.2 583.1L1711.1 589.6L1711.3 596.8L1714.3 603.2L1716.9 610.0L1720.3 616.4M1750.6 526.5L1749.0 533.7L1751.9 540.9L1750.7 548.1L1749.6 555.3L1750.6 562.4L1748.0 569.1L1746.3 575.9L1747.5 583.3L1744.5 589.9L1747.2 598.6L1749.8 607.3L1750.6 616.4M1535.7 544.7L1540.5 550.1L1542.5 557.4L1547.8 562.4L1555.2 567.9L1562.9 572.9L1567.8 582.2L1575.0 589.9L1581.4 596.3L1587.1 603.2L1593.9 610.7L1602.3 616.4M1525.4 562.4L1529.9 569.2L1534.9 575.8L1538.7 583.1L1539.8 590.1L1541.4 596.9L1544.7 603.2L1542.9 613.4L1538.7 622.9L1535.4 631.3L1532.3 639.9L1529.6 648.5M1508.4 599.9L1517.9 604.1L1526.6 609.8L1534.8 613.8L1543.3 617.5L1550.8 622.9L1557.5 628.7L1562.9 635.8L1560.6 645.6L1556.8 654.8L1552.0 664.1L1547.8 673.6L1545.8 682.8L1544.7 692.1M1587.1 586.5L1593.8 590.8L1599.2 596.6L1606.4 602.2L1611.3 609.8M1575.0 622.9L1578.5 629.1L1581.1 635.8L1578.0 648.5M1623.4 593.2L1632.6 592.1L1641.6 589.9L1650.7 583.1L1657.9 578.8L1665.8 576.3M1690.1 619.7L1687.0 629.4L1689.1 637.3L1690.1 645.4L1696.0 652.7L1700.3 661.1L1708.6 664.5L1717.3 666.1M1675.5 651.7L1678.5 644.3L1679.9 636.3L1684.0 629.4M1066.4 520.6L1068.9 527.3L1069.1 534.4L1069.9 541.4L1071.2 548.3L1064.2 551.4L1058.1 556.5L1051.1 559.8L1043.5 561.8L1037.1 566.1L1030.1 569.4L1025.8 579.0M1130.6 511.6L1129.0 519.2L1126.7 526.6L1123.9 533.9L1127.2 541.9L1133.0 548.3L1136.0 561.0M1148.7 539.7L1145.0 547.1L1140.1 553.8L1136.0 561.0M1097.9 635.8L1091.1 630.5L1084.8 624.8L1078.5 619.0L1073.1 613.6L1067.3 608.8L1060.1 605.9L1053.7 601.9L1048.2 596.6M1045.2 658.0L1053.8 659.5L1062.5 658.6L1071.2 658.8L1079.7 661.1L1084.6 670.5L1091.8 674.8L1096.1 681.7M1078.5 668.6L1080.0 677.4L1083.9 685.4L1076.5 685.8L1069.0 684.8L1061.5 686.0L1062.2 694.0L1062.1 701.2L1060.3 708.3L1061.4 715.5L1060.9 722.7M1083.9 685.4L1076.5 686.7L1069.1 687.3L1061.5 686.0M1083.9 685.4L1084.8 692.9L1085.6 700.4L1085.8 708.1L1088.2 715.4M1096.1 681.7L1100.3 692.1L1099.8 700.0L1096.3 707.1L1094.8 714.8M1160.8 673.0L1166.3 676.7L1169.7 684.3L1172.4 692.1L1163.3 701.3L1157.2 707.4L1151.2 713.6L1144.9 718.4L1137.8 721.9L1130.6 725.1M1166.3 676.7L1159.0 688.5L1162.6 694.9L1166.3 701.3L1166.3 708.7L1173.0 715.4L1176.0 725.7L1176.6 739.7M1137.8 739.7L1146.9 739.7L1159.0 739.7L1167.1 741.9L1175.4 741.5M1146.9 739.7L1148.5 746.7L1147.6 753.9L1146.9 761.1L1148.1 768.1L1145.1 780.3M1159.0 739.7L1161.3 748.5L1166.3 756.0L1163.3 768.1M1279.5 702.0L1270.8 702.0L1262.1 701.3L1253.8 697.8L1245.0 698.3L1237.5 693.8L1228.8 692.2L1220.8 689.1M1268.0 616.4L1272.8 624.5L1273.6 634.1L1278.3 642.2L1283.9 646.6L1288.0 652.6L1294.0 656.7L1299.5 661.1M1220.8 679.8L1220.8 672.4L1217.7 665.4L1217.8 658.0L1220.2 651.0L1219.9 643.5L1222.0 636.5L1223.8 629.4M1299.5 664.3L1303.2 671.1L1308.6 676.7L1315.7 677.8L1322.7 675.7L1329.8 676.7M1369.1 704.4L1357.0 710.5L1352.6 716.2L1347.2 720.9L1341.9 725.7L1329.8 728.8M1340.1 695.2L1352.2 689.1M1295.9 725.1L1290.4 716.6L1285.0 709.2L1279.5 702.0M1257.7 759.1L1254.1 768.1L1263.2 769.4L1263.2 759.1M1263.2 759.1L1273.5 758.7L1283.8 759.1L1283.5 766.6L1281.7 773.8L1279.5 780.9L1278.2 788.3L1277.0 795.7L1279.2 803.4L1277.1 810.8L1282.1 817.1L1287.4 823.1M1277.1 810.8L1284.4 816.9L1286.6 826.5L1290.4 835.5L1291.9 844.9L1290.4 854.3M1260.2 841.7L1262.0 848.0L1254.7 852.2L1249.4 859.1L1242.0 863.2L1231.1 863.8M1211.7 854.3L1205.7 863.8M1149.9 860.6L1160.2 860.6L1167.8 860.8L1175.4 860.5L1183.0 860.6L1190.5 860.0L1198.2 861.3L1205.7 863.8L1203.9 872.5L1201.4 880.9L1199.6 889.6L1199.8 898.5L1199.6 907.4L1201.5 915.0L1204.4 922.2L1197.8 933.1M1254.1 889.6L1248.2 897.9L1242.0 906.1L1232.9 914.1M1268.0 892.9L1256.5 890.3L1252.7 883.7L1247.9 877.8L1246.0 870.2L1242.0 863.8M1277.7 921.5L1267.4 922.9L1260.8 928.0L1254.1 933.1L1255.3 947.1L1245.0 943.6L1254.1 938.0M1211.7 929.7L1214.5 936.4L1214.9 943.9L1217.8 950.6L1220.0 958.1L1223.8 964.9M1254.1 916.1L1245.1 921.3L1235.9 926.3M1315.9 856.2L1309.9 863.9L1302.5 870.2L1298.1 876.7L1294.5 883.9L1289.9 890.3L1284.4 896.2M1211.7 782.1L1214.9 788.4L1218.9 794.3L1221.0 801.2L1223.8 807.7L1232.9 804.7L1242.0 801.6M1199.6 753.0L1206.7 758.0L1211.4 765.4L1217.8 771.2L1221.2 764.3L1227.4 759.5L1232.1 753.5L1235.9 746.9M1223.8 734.8L1216.8 731.8L1209.1 730.1L1202.6 725.7M1114.8 679.8L1120.9 683.9L1127.2 687.7L1133.0 692.1L1126.9 704.4L1117.9 703.0L1108.8 704.4M1151.2 692.1L1144.3 686.8L1139.0 679.8M1366.1 844.9L1362.1 850.7L1358.6 856.8L1357.0 863.8L1354.8 873.3L1354.0 883.1L1354.5 893.1L1357.0 902.8M1762.7 734.8L1756.7 746.9L1764.6 749.1L1771.8 753.0L1765.7 765.1M1780.9 728.8L1774.8 740.9L1780.9 753.0M1914.1 765.1L1914.6 773.6L1918.2 781.3L1920.1 789.4M1895.9 777.2L1900.9 784.3L1908.0 789.4M1805.1 876.6L1808.0 883.9L1814.1 889.2L1816.4 896.9L1820.1 903.7L1826.5 908.8L1829.3 916.1M1877.8 889.6L1881.2 896.0L1883.1 903.2L1887.8 909.0L1889.9 916.1M1944.4 883.1L1947.9 890.4L1954.0 895.8L1957.2 903.4L1962.5 909.4" fill="none" stroke="#c9c9c9" stroke-width="0.9"/></g><text transform="translate(1235.7,257.7) scale(0.9,1)" text-anchor="middle" font-size="11.5" font-weight="bold" fill="#4a4a4a" letter-spacing="0" stroke="#fff" stroke-width="2.5" stroke-linejoin="round" paint-order="stroke">FINLAND</text><text transform="translate(1140,292.8) scale(0.9,1)" text-anchor="middle" font-size="11.5" font-weight="bold" fill="#4a4a4a" letter-spacing="0" stroke="#fff" stroke-width="2.5" stroke-linejoin="round" paint-order="stroke">NORWAY</text><text transform="translate(1408.2,247.9) scale(0.92,1)" text-anchor="middle" font-size="10" font-weight="bold" fill="#6e6363" letter-spacing="1.1" stroke="#fff" stroke-width="2.5" stroke-linejoin="round" paint-order="stroke">KOMI</text><text transform="translate(1495.4,257.2) scale(0.92,1)" text-anchor="middle" font-size="10" font-weight="bold" fill="#6e6363" letter-spacing="1.1" stroke="#fff" stroke-width="2.5" stroke-linejoin="round" paint-order="stroke">KHANTY-</text><text transform="translate(1495.4,269.1) scale(0.92,1)" text-anchor="middle" font-size="10" font-weight="bold" fill="#6e6363" letter-spacing="1.1" stroke="#fff" stroke-width="2.5" stroke-linejoin="round" paint-order="stroke">MANSIYSK</text><text transform="translate(1495.4,281.2) scale(0.92,1)" text-anchor="middle" font-size="10" font-weight="bold" fill="#6e6363" letter-spacing="1.1" stroke="#fff" stroke-width="2.5" stroke-linejoin="round" paint-order="stroke">AUTONOMOUS</text><text transform="translate(1495.4,293.1) scale(0.92,1)" text-anchor="middle" font-size="10" font-weight="bold" fill="#6e6363" letter-spacing="1.1" stroke="#fff" stroke-width="2.5" stroke-linejoin="round" paint-order="stroke">OKRUG – UGRA</text><text transform="translate(1233,314.0) scale(0.9,1)" text-anchor="middle" font-size="11.5" font-weight="bold" fill="#4a4a4a" letter-spacing="0" stroke="#fff" stroke-width="2.5" stroke-linejoin="round" paint-order="stroke">ESTONIA</text><text transform="translate(1229.6,336.1) scale(0.9,1)" text-anchor="middle" font-size="11.5" font-weight="bold" fill="#4a4a4a" letter-spacing="0" stroke="#fff" stroke-width="2.5" stroke-linejoin="round" paint-order="stroke">LATVIA</text><text transform="translate(1338.7,349.4) scale(1.0,1)" text-anchor="middle" font-size="14.5" font-weight="normal" fill="#555555" letter-spacing="0" stroke="#fff" stroke-width="2.5" stroke-linejoin="round" paint-order="stroke">Moscow</text><text transform="translate(1141.9,348.8) scale(0.9,1)" text-anchor="middle" font-size="11.5" font-weight="bold" fill="#4a4a4a" letter-spacing="0" stroke="#fff" stroke-width="2.5" stroke-linejoin="round" paint-order="stroke">DENMARK</text><text transform="translate(1076,352.4) scale(0.88,1)" text-anchor="middle" font-size="14" font-weight="bold" fill="#454545" letter-spacing="0" stroke="#fff" stroke-width="2.5" stroke-linejoin="round" paint-order="stroke">ED</text><text transform="translate(1079.8,367.7) scale(0.88,1)" text-anchor="middle" font-size="14" font-weight="bold" fill="#454545" letter-spacing="0" stroke="#fff" stroke-width="2.5" stroke-linejoin="round" paint-order="stroke">OM</text><text transform="translate(1418,360.8) scale(0.92,1)" text-anchor="middle" font-size="10" font-weight="bold" fill="#6e6363" letter-spacing="1.1" stroke="#fff" stroke-width="2.5" stroke-linejoin="round" paint-order="stroke">BASHKORTOSTAN</text><text transform="translate(1247,372.1) scale(0.9,1)" text-anchor="middle" font-size="11.5" font-weight="bold" fill="#4a4a4a" letter-spacing="0" stroke="#fff" stroke-width="2.5" stroke-linejoin="round" paint-order="stroke">BELARUS</text><text transform="translate(1580.2,378.7) scale(0.92,1)" text-anchor="middle" font-size="10" font-weight="bold" fill="#6e6363" letter-spacing="1.1" stroke="#fff" stroke-width="2.5" stroke-linejoin="round" paint-order="stroke">ALTAI KRAI</text><text transform="translate(1141.9,396.0) scale(0.88,1)" text-anchor="middle" font-size="14" font-weight="bold" fill="#454545" letter-spacing="0" stroke="#fff" stroke-width="2.5" stroke-linejoin="round" paint-order="stroke">GERMANY</text><text transform="translate(1268.7,410.1) scale(0.9,1)" text-anchor="middle" font-size="11.5" font-weight="bold" fill="#4a4a4a" letter-spacing="0" stroke="#fff" stroke-width="2.5" stroke-linejoin="round" paint-order="stroke">UKRAINE</text><text transform="translate(1473.5,430.7) scale(0.9,1)" text-anchor="middle" font-size="11.5" font-weight="bold" fill="#4a4a4a" letter-spacing="0" stroke="#fff" stroke-width="2.5" stroke-linejoin="round" paint-order="stroke">KAZAKHSTAN</text><text transform="translate(1159,430.7) scale(0.9,1)" text-anchor="middle" font-size="11.5" font-weight="bold" fill="#4a4a4a" letter-spacing="0" stroke="#fff" stroke-width="2.5" stroke-linejoin="round" paint-order="stroke">AUSTRIA</text><text transform="translate(1091,437.0) scale(0.88,1)" text-anchor="middle" font-size="14" font-weight="bold" fill="#454545" letter-spacing="0" stroke="#fff" stroke-width="2.5" stroke-linejoin="round" paint-order="stroke">FRANCE</text><text transform="translate(1228.6,441.8) scale(0.9,1)" text-anchor="middle" font-size="11.5" font-weight="bold" fill="#4a4a4a" letter-spacing="0" stroke="#fff" stroke-width="2.5" stroke-linejoin="round" paint-order="stroke">ROMANIA</text><text transform="translate(1332.1,454.6) scale(0.92,1)" text-anchor="middle" font-size="10" font-weight="bold" fill="#6e6363" letter-spacing="1.1" stroke="#fff" stroke-width="2.5" stroke-linejoin="round" paint-order="stroke">KARACHAY-</text><text transform="translate(1332.1,466.7) scale(0.92,1)" text-anchor="middle" font-size="10" font-weight="bold" fill="#6e6363" letter-spacing="1.1" stroke="#fff" stroke-width="2.5" stroke-linejoin="round" paint-order="stroke">CHERKESIA</text><text transform="translate(1531.6,479.1) scale(0.9,1)" text-anchor="middle" font-size="11.5" font-weight="bold" fill="#4a4a4a" letter-spacing="0" stroke="#fff" stroke-width="2.5" stroke-linejoin="round" paint-order="stroke">KYRGYZSTAN</text><text transform="translate(1090.4,470.9) scale(0.9,1)" text-anchor="middle" font-size="11.5" font-weight="bold" fill="#4a4a4a" letter-spacing="0" stroke="#fff" stroke-width="2.5" stroke-linejoin="round" paint-order="stroke">ANDORRA</text><text transform="translate(1156.4,471.3) scale(0.88,1)" text-anchor="middle" font-size="14" font-weight="bold" fill="#454545" letter-spacing="0" stroke="#fff" stroke-width="2.5" stroke-linejoin="round" paint-order="stroke">ITALY</text><text transform="translate(1233.8,470.4) scale(0.9,1)" text-anchor="middle" font-size="11.5" font-weight="bold" fill="#4a4a4a" letter-spacing="0" stroke="#fff" stroke-width="2.5" stroke-linejoin="round" paint-order="stroke">BULGARIA</text><text transform="translate(1349.8,484.9) scale(0.9,1)" text-anchor="middle" font-size="11.5" font-weight="bold" fill="#4a4a4a" letter-spacing="0" stroke="#fff" stroke-width="2.5" stroke-linejoin="round" paint-order="stroke">ARMENIA</text><text transform="translate(1507.8,502.1) scale(0.9,1)" text-anchor="middle" font-size="11.5" font-weight="bold" fill="#4a4a4a" letter-spacing="0" stroke="#fff" stroke-width="2.5" stroke-linejoin="round" paint-order="stroke">TAJIKISTAN</text><text transform="translate(1212.7,499.4) scale(0.9,1)" text-anchor="middle" font-size="11.5" font-weight="bold" fill="#4a4a4a" letter-spacing="0" stroke="#fff" stroke-width="2.5" stroke-linejoin="round" paint-order="stroke">GREECE</text><text transform="translate(1290.6,500.3) scale(0.88,1)" text-anchor="middle" font-size="14" font-weight="bold" fill="#454545" letter-spacing="0" stroke="#fff" stroke-width="2.5" stroke-linejoin="round" paint-order="stroke">TURKEY</text><text transform="translate(1136.6,537.7) scale(0.9,1)" text-anchor="middle" font-size="11.5" font-weight="bold" fill="#4a4a4a" letter-spacing="0" stroke="#fff" stroke-width="2.5" stroke-linejoin="round" paint-order="stroke">TUNISIA</text><text transform="translate(1315.7,532.5) scale(0.9,1)" text-anchor="middle" font-size="11.5" font-weight="bold" fill="#4a4a4a" letter-spacing="0" stroke="#fff" stroke-width="2.5" stroke-linejoin="round" paint-order="stroke">SYRIA</text><text transform="translate(1480,538.5) scale(0.9,1)" text-anchor="middle" font-size="11.5" font-weight="bold" fill="#4a4a4a" letter-spacing="0" stroke="#fff" stroke-width="2.5" stroke-linejoin="round" paint-order="stroke">AFGHANISTAN</text><text transform="translate(1409.3,547.9) scale(0.88,1)" text-anchor="middle" font-size="14" font-weight="bold" fill="#454545" letter-spacing="0" stroke="#fff" stroke-width="2.5" stroke-linejoin="round" paint-order="stroke">IRAN</text><text transform="translate(1290.4,554.9) scale(0.9,1)" text-anchor="middle" font-size="11.5" font-weight="bold" fill="#4a4a4a" letter-spacing="0" stroke="#fff" stroke-width="2.5" stroke-linejoin="round" paint-order="stroke">ISRAEL</text><text transform="translate(1510.5,564.3) scale(0.88,1)" text-anchor="middle" font-size="14" font-weight="bold" fill="#454545" letter-spacing="0" stroke="#fff" stroke-width="2.5" stroke-linejoin="round" paint-order="stroke">PAKISTAN</text><text transform="translate(1097.5,579.2) scale(0.9,1)" text-anchor="middle" font-size="11.5" font-weight="bold" fill="#4a4a4a" letter-spacing="0" stroke="#fff" stroke-width="2.5" stroke-linejoin="round" paint-order="stroke">ALGERIA</text><text transform="translate(1188.9,587.1) scale(0.9,1)" text-anchor="middle" font-size="11.5" font-weight="bold" fill="#4a4a4a" letter-spacing="0" stroke="#fff" stroke-width="2.5" stroke-linejoin="round" paint-order="stroke">LIBYA</text><text transform="translate(1256.8,592.3) scale(0.88,1)" text-anchor="middle" font-size="14" font-weight="bold" fill="#454545" letter-spacing="0" stroke="#fff" stroke-width="2.5" stroke-linejoin="round" paint-order="stroke">EGYPT</text><text transform="translate(1335.6,588.8) scale(0.88,1)" text-anchor="middle" font-size="14" font-weight="bold" fill="#454545" letter-spacing="0" stroke="#fff" stroke-width="2.5" stroke-linejoin="round" paint-order="stroke">SAUDI</text><text transform="translate(1335.6,603.9) scale(0.88,1)" text-anchor="middle" font-size="14" font-weight="bold" fill="#454545" letter-spacing="0" stroke="#fff" stroke-width="2.5" stroke-linejoin="round" paint-order="stroke">ARABIA</text><text transform="translate(1389.7,597.2) scale(0.9,1)" text-anchor="middle" font-size="11.5" font-weight="bold" fill="#4a4a4a" letter-spacing="0" stroke="#fff" stroke-width="2.5" stroke-linejoin="round" paint-order="stroke">QATAR</text><text transform="translate(1588,578.7) scale(0.9,1)" text-anchor="middle" font-size="11.5" font-weight="bold" fill="#4a4a4a" letter-spacing="0" stroke="#fff" stroke-width="2.5" stroke-linejoin="round" paint-order="stroke">NEPAL</text><text transform="translate(1526.3,586.9) scale(0.92,1)" text-anchor="middle" font-size="10" font-weight="bold" fill="#6e6363" letter-spacing="1.1" stroke="#fff" stroke-width="2.5" stroke-linejoin="round" paint-order="stroke">RAJASTHAN</text><text transform="translate(1555.4,617.9) scale(0.88,1)" text-anchor="middle" font-size="14" font-weight="bold" fill="#454545" letter-spacing="0" stroke="#fff" stroke-width="2.5" stroke-linejoin="round" paint-order="stroke">INDIA</text><text transform="translate(1424.1,625.7) scale(0.9,1)" text-anchor="middle" font-size="11.5" font-weight="bold" fill="#4a4a4a" letter-spacing="0" stroke="#fff" stroke-width="2.5" stroke-linejoin="round" paint-order="stroke">OMAN</text><text transform="translate(1135.8,646.9) scale(0.9,1)" text-anchor="middle" font-size="11.5" font-weight="bold" fill="#4a4a4a" letter-spacing="0" stroke="#fff" stroke-width="2.5" stroke-linejoin="round" paint-order="stroke">NIGER</text><text transform="translate(1194.7,660.1) scale(0.9,1)" text-anchor="middle" font-size="11.5" font-weight="bold" fill="#4a4a4a" letter-spacing="0" stroke="#fff" stroke-width="2.5" stroke-linejoin="round" paint-order="stroke">CHAD</text><text transform="translate(1369.1,656.6) scale(0.9,1)" text-anchor="middle" font-size="11.5" font-weight="bold" fill="#4a4a4a" letter-spacing="0" stroke="#fff" stroke-width="2.5" stroke-linejoin="round" paint-order="stroke">YEMEN</text><text transform="translate(1073.2,655.3) scale(0.9,1)" text-anchor="middle" font-size="11.5" font-weight="bold" fill="#4a4a4a" letter-spacing="0" stroke="#fff" stroke-width="2.5" stroke-linejoin="round" paint-order="stroke">MALI</text><text transform="translate(1565.1,652.6) scale(0.92,1)" text-anchor="middle" font-size="10" font-weight="bold" fill="#6e6363" letter-spacing="1.1" stroke="#fff" stroke-width="2.5" stroke-linejoin="round" paint-order="stroke">ANDHRA</text><text transform="translate(1565.1,663.9) scale(0.92,1)" text-anchor="middle" font-size="10" font-weight="bold" fill="#6e6363" letter-spacing="1.1" stroke="#fff" stroke-width="2.5" stroke-linejoin="round" paint-order="stroke">PRADESH</text><text transform="translate(1257.5,665.1) scale(0.9,1)" text-anchor="middle" font-size="11.5" font-weight="bold" fill="#4a4a4a" letter-spacing="0" stroke="#fff" stroke-width="2.5" stroke-linejoin="round" paint-order="stroke">SUDAN</text><text transform="translate(2012.2,247.9) scale(0.92,1)" text-anchor="middle" font-size="10" font-weight="bold" fill="#6e6363" letter-spacing="1.1" stroke="#fff" stroke-width="2.5" stroke-linejoin="round" paint-order="stroke">MAGADAN</text><text transform="translate(2012.2,259.1) scale(0.92,1)" text-anchor="middle" font-size="10" font-weight="bold" fill="#6e6363" letter-spacing="1.1" stroke="#fff" stroke-width="2.5" stroke-linejoin="round" paint-order="stroke">REGION</text><text transform="translate(2048.3,325.5) scale(0.92,1)" text-anchor="middle" font-size="10" font-weight="bold" fill="#6e6363" letter-spacing="1.1" stroke="#fff" stroke-width="2.5" stroke-linejoin="round" paint-order="stroke">KAMCHATKA</text><text transform="translate(2048.3,337.2) scale(0.92,1)" text-anchor="middle" font-size="10" font-weight="bold" fill="#6e6363" letter-spacing="1.1" stroke="#fff" stroke-width="2.5" stroke-linejoin="round" paint-order="stroke">KRAI</text><text transform="translate(1647.4,391.6) scale(0.92,1)" text-anchor="middle" font-size="10" font-weight="bold" fill="#6e6363" letter-spacing="1.1" stroke="#fff" stroke-width="2.5" stroke-linejoin="round" paint-order="stroke">TUVA</text><text transform="translate(1742.4,378.7) scale(0.92,1)" text-anchor="middle" font-size="10" font-weight="bold" fill="#6e6363" letter-spacing="1.1" stroke="#fff" stroke-width="2.5" stroke-linejoin="round" paint-order="stroke">BURYATIA</text><text transform="translate(1857,377.6) scale(0.92,1)" text-anchor="middle" font-size="10" font-weight="bold" fill="#6e6363" letter-spacing="1.1" stroke="#fff" stroke-width="2.5" stroke-linejoin="round" paint-order="stroke">AMUR OBLAST</text><text transform="translate(1854.3,417.5) scale(0.92,1)" text-anchor="middle" font-size="10" font-weight="bold" fill="#6e6363" letter-spacing="1.1" stroke="#fff" stroke-width="2.5" stroke-linejoin="round" paint-order="stroke">HEILONGJIANG</text><text transform="translate(1854.3,429.3) scale(0.92,1)" text-anchor="middle" font-size="10" font-weight="bold" fill="#6e6363" letter-spacing="1.1" stroke="#fff" stroke-width="2.5" stroke-linejoin="round" paint-order="stroke">PROVINCE</text><text transform="translate(1947.9,401.7) scale(0.92,1)" text-anchor="middle" font-size="10" font-weight="bold" fill="#6e6363" letter-spacing="1.1" stroke="#fff" stroke-width="2.5" stroke-linejoin="round" paint-order="stroke">SAKHALIN</text><text transform="translate(1947.9,413.5) scale(0.92,1)" text-anchor="middle" font-size="10" font-weight="bold" fill="#6e6363" letter-spacing="1.1" stroke="#fff" stroke-width="2.5" stroke-linejoin="round" paint-order="stroke">OBLAST</text><text transform="translate(1707.9,434.3) scale(0.9,1)" text-anchor="middle" font-size="11.5" font-weight="bold" fill="#4a4a4a" letter-spacing="0" stroke="#fff" stroke-width="2.5" stroke-linejoin="round" paint-order="stroke">MONGOLIA</text><text transform="translate(1771.9,458.7) scale(0.92,1)" text-anchor="middle" font-size="10" font-weight="bold" fill="#6e6363" letter-spacing="1.1" stroke="#fff" stroke-width="2.5" stroke-linejoin="round" paint-order="stroke">INNER</text><text transform="translate(1771.9,470.8) scale(0.92,1)" text-anchor="middle" font-size="10" font-weight="bold" fill="#6e6363" letter-spacing="1.1" stroke="#fff" stroke-width="2.5" stroke-linejoin="round" paint-order="stroke">MONGOLIA</text><text transform="translate(1842.2,460.6) scale(0.92,1)" text-anchor="middle" font-size="10" font-weight="bold" fill="#6e6363" letter-spacing="1.1" stroke="#fff" stroke-width="2.5" stroke-linejoin="round" paint-order="stroke">JILIN</text><text transform="translate(1842.2,472.6) scale(0.92,1)" text-anchor="middle" font-size="10" font-weight="bold" fill="#6e6363" letter-spacing="1.1" stroke="#fff" stroke-width="2.5" stroke-linejoin="round" paint-order="stroke">PROVINCE</text><text transform="translate(1782,493.2) scale(0.92,1)" text-anchor="middle" font-size="10" font-weight="bold" fill="#6e6363" letter-spacing="1.1" stroke="#fff" stroke-width="2.5" stroke-linejoin="round" paint-order="stroke">HEBEI</text><text transform="translate(1782,505.0) scale(0.92,1)" text-anchor="middle" font-size="10" font-weight="bold" fill="#6e6363" letter-spacing="1.1" stroke="#fff" stroke-width="2.5" stroke-linejoin="round" paint-order="stroke">PROVINCE</text><text transform="translate(1852.1,510.7) scale(0.88,1)" text-anchor="middle" font-size="14" font-weight="bold" fill="#454545" letter-spacing="0" stroke="#fff" stroke-width="2.5" stroke-linejoin="round" paint-order="stroke">SOUTH</text><text transform="translate(1852.1,526.2) scale(0.88,1)" text-anchor="middle" font-size="14" font-weight="bold" fill="#454545" letter-spacing="0" stroke="#fff" stroke-width="2.5" stroke-linejoin="round" paint-order="stroke">KOREA</text><text transform="translate(1715.1,530.8) scale(0.88,1)" text-anchor="middle" font-size="14" font-weight="bold" fill="#454545" letter-spacing="0" stroke="#fff" stroke-width="2.5" stroke-linejoin="round" paint-order="stroke">CHINA</text><text transform="translate(1950.1,526.2) scale(1.0,1)" text-anchor="middle" font-size="14.5" font-weight="normal" fill="#555555" letter-spacing="0" stroke="#fff" stroke-width="2.5" stroke-linejoin="round" paint-order="stroke">Tokyo</text><text transform="translate(1814.1,558.2) scale(1.0,1)" text-anchor="middle" font-size="14.5" font-weight="normal" fill="#555555" letter-spacing="0" stroke="#fff" stroke-width="2.5" stroke-linejoin="round" paint-order="stroke">Shanghai</text><text transform="translate(1629.5,566.3) scale(0.92,1)" text-anchor="middle" font-size="10" font-weight="bold" fill="#6e6363" letter-spacing="1.1" stroke="#fff" stroke-width="2.5" stroke-linejoin="round" paint-order="stroke">TIBET</text><text transform="translate(1756.1,575.4) scale(0.92,1)" text-anchor="middle" font-size="10" font-weight="bold" fill="#6e6363" letter-spacing="1.1" stroke="#fff" stroke-width="2.5" stroke-linejoin="round" paint-order="stroke">HUNAN</text><text transform="translate(1756.1,587.2) scale(0.92,1)" text-anchor="middle" font-size="10" font-weight="bold" fill="#6e6363" letter-spacing="1.1" stroke="#fff" stroke-width="2.5" stroke-linejoin="round" paint-order="stroke">PROVINCE</text><text transform="translate(1897.1,626.2) scale(1.0,1)" text-anchor="middle" font-size="11.5" font-weight="normal" fill="#a8badb" letter-spacing="2.4" font-style="italic" stroke="#fff" stroke-width="2.5" stroke-linejoin="round" paint-order="stroke">Philippine</text><text transform="translate(1897.1,639.6) scale(1.0,1)" text-anchor="middle" font-size="11.5" font-weight="normal" fill="#a8badb" letter-spacing="2.4" font-style="italic" stroke="#fff" stroke-width="2.5" stroke-linejoin="round" paint-order="stroke">Sea</text><text transform="translate(1625.5,603.4) scale(0.9,1)" text-anchor="middle" font-size="11.5" font-weight="bold" fill="#4a4a4a" letter-spacing="0" stroke="#fff" stroke-width="2.5" stroke-linejoin="round" paint-order="stroke">BANGLADESH</text><text transform="translate(1739.2,605.9) scale(0.92,1)" text-anchor="middle" font-size="10" font-weight="bold" fill="#6e6363" letter-spacing="1.1" stroke="#fff" stroke-width="2.5" stroke-linejoin="round" paint-order="stroke">GUANGXI</text><text transform="translate(1811.7,606.7) scale(0.9,1)" text-anchor="middle" font-size="11.5" font-weight="bold" fill="#4a4a4a" letter-spacing="0" stroke="#fff" stroke-width="2.5" stroke-linejoin="round" paint-order="stroke">TAIWAN</text><text transform="translate(1742.7,636.9) scale(0.92,1)" text-anchor="middle" font-size="10" font-weight="bold" fill="#6e6363" letter-spacing="1.1" stroke="#fff" stroke-width="2.5" stroke-linejoin="round" paint-order="stroke">HAINAN</text><text transform="translate(1660.3,650.8) scale(0.9,1)" text-anchor="middle" font-size="11.5" font-weight="bold" fill="#4a4a4a" letter-spacing="0" stroke="#fff" stroke-width="2.5" stroke-linejoin="round" paint-order="stroke">MYANMAR</text><text transform="translate(1127.9,698.5) scale(0.88,1)" text-anchor="middle" font-size="14" font-weight="bold" fill="#454545" letter-spacing="0" stroke="#fff" stroke-width="2.5" stroke-linejoin="round" paint-order="stroke">NIGERIA</text><text transform="translate(1313.4,695.1) scale(0.88,1)" text-anchor="middle" font-size="14" font-weight="bold" fill="#454545" letter-spacing="0" stroke="#fff" stroke-width="2.5" stroke-linejoin="round" paint-order="stroke">ETHIOPIA</text><text transform="translate(1553.9,688.8) scale(0.92,1)" text-anchor="middle" font-size="10" font-weight="bold" fill="#6e6363" letter-spacing="1.1" stroke="#fff" stroke-width="2.5" stroke-linejoin="round" paint-order="stroke">TAMIL NADU</text><text transform="translate(1567.3,710.2) scale(0.9,1)" text-anchor="middle" font-size="11.5" font-weight="bold" fill="#4a4a4a" letter-spacing="0" stroke="#fff" stroke-width="2.5" stroke-linejoin="round" paint-order="stroke">SRI LANKA</text><text transform="translate(1158.8,728.0) scale(0.9,1)" text-anchor="middle" font-size="11.5" font-weight="bold" fill="#4a4a4a" letter-spacing="0" stroke="#fff" stroke-width="2.5" stroke-linejoin="round" paint-order="stroke">CAMEROON</text><text transform="translate(1311.9,748.0) scale(0.88,1)" text-anchor="middle" font-size="14" font-weight="bold" fill="#454545" letter-spacing="0" stroke="#fff" stroke-width="2.5" stroke-linejoin="round" paint-order="stroke">KENYA</text><text transform="translate(1223.2,759.5) scale(0.88,1)" text-anchor="middle" font-size="14" font-weight="bold" fill="#454545" letter-spacing="0" stroke="#fff" stroke-width="2.5" stroke-linejoin="round" paint-order="stroke">DEMOCRATIC</text><text transform="translate(1223.2,775.2) scale(0.88,1)" text-anchor="middle" font-size="14" font-weight="bold" fill="#454545" letter-spacing="0" stroke="#fff" stroke-width="2.5" stroke-linejoin="round" paint-order="stroke">REPUBLIC OF</text><text transform="translate(1223.2,791.0) scale(0.88,1)" text-anchor="middle" font-size="14" font-weight="bold" fill="#454545" letter-spacing="0" stroke="#fff" stroke-width="2.5" stroke-linejoin="round" paint-order="stroke">THE CONGO</text><text transform="translate(1503.2,808.7) scale(1.0,1)" text-anchor="middle" font-size="11.5" font-weight="normal" fill="#a8badb" letter-spacing="2.4" font-style="italic" stroke="#fff" stroke-width="2.5" stroke-linejoin="round" paint-order="stroke">Indian</text><text transform="translate(1503.2,825.3) scale(1.0,1)" text-anchor="middle" font-size="11.5" font-weight="normal" fill="#a8badb" letter-spacing="2.4" font-style="italic" stroke="#fff" stroke-width="2.5" stroke-linejoin="round" paint-order="stroke">Ocean</text><text transform="translate(1185.4,828.2) scale(0.9,1)" text-anchor="middle" font-size="11.5" font-weight="bold" fill="#4a4a4a" letter-spacing="0" stroke="#fff" stroke-width="2.5" stroke-linejoin="round" paint-order="stroke">ANGOLA</text><text transform="translate(1246.1,845.1) scale(0.9,1)" text-anchor="middle" font-size="11.5" font-weight="bold" fill="#4a4a4a" letter-spacing="0" stroke="#fff" stroke-width="2.5" stroke-linejoin="round" paint-order="stroke">ZAMBIA</text><text transform="translate(1290.5,875.1) scale(0.9,1)" text-anchor="middle" font-size="11.5" font-weight="bold" fill="#4a4a4a" letter-spacing="0" stroke="#fff" stroke-width="2.5" stroke-linejoin="round" paint-order="stroke">MOZAMBIQUE</text><text transform="translate(1184,900.9) scale(0.9,1)" text-anchor="middle" font-size="11.5" font-weight="bold" fill="#4a4a4a" letter-spacing="0" stroke="#fff" stroke-width="2.5" stroke-linejoin="round" paint-order="stroke">NAMIBIA</text><text transform="translate(1257.5,902.1) scale(0.92,1)" text-anchor="middle" font-size="10" font-weight="bold" fill="#6e6363" letter-spacing="1.1" stroke="#fff" stroke-width="2.5" stroke-linejoin="round" paint-order="stroke">LIMPOPO</text><text transform="translate(1230.3,931.8) scale(0.88,1)" text-anchor="middle" font-size="14" font-weight="bold" fill="#454545" letter-spacing="0" stroke="#fff" stroke-width="2.5" stroke-linejoin="round" paint-order="stroke">SOUTH</text><text transform="translate(1230.3,947.0) scale(0.88,1)" text-anchor="middle" font-size="14" font-weight="bold" fill="#454545" letter-spacing="0" stroke="#fff" stroke-width="2.5" stroke-linejoin="round" paint-order="stroke">AFRICA</text><text transform="translate(1231.2,975.8) scale(1.0,1)" text-anchor="middle" font-size="14.5" font-weight="normal" fill="#555555" letter-spacing="0" stroke="#fff" stroke-width="2.5" stroke-linejoin="round" paint-order="stroke">Cape Town</text><text transform="translate(1736.1,675.9) scale(0.88,1)" text-anchor="middle" font-size="14" font-weight="bold" fill="#454545" letter-spacing="0" stroke="#fff" stroke-width="2.5" stroke-linejoin="round" paint-order="stroke">VIETNAM</text><text transform="translate(1654.5,689.0) scale(1.0,1)" text-anchor="middle" font-size="11.5" font-weight="normal" fill="#a8badb" letter-spacing="2.4" font-style="italic" stroke="#fff" stroke-width="2.5" stroke-linejoin="round" paint-order="stroke">Andaman</text><text transform="translate(1654.5,702.2) scale(1.0,1)" text-anchor="middle" font-size="11.5" font-weight="normal" fill="#a8badb" letter-spacing="2.4" font-style="italic" stroke="#fff" stroke-width="2.5" stroke-linejoin="round" paint-order="stroke">Sea</text><text transform="translate(1806.2,695.1) scale(1.0,1)" text-anchor="middle" font-size="11.5" font-weight="normal" fill="#a8badb" letter-spacing="2.4" font-style="italic" stroke="#fff" stroke-width="2.5" stroke-linejoin="round" paint-order="stroke">Sulu</text><text transform="translate(1806.2,708.5) scale(1.0,1)" text-anchor="middle" font-size="11.5" font-weight="normal" fill="#a8badb" letter-spacing="2.4" font-style="italic" stroke="#fff" stroke-width="2.5" stroke-linejoin="round" paint-order="stroke">Sea</text><text transform="translate(1772.7,729.4) scale(0.9,1)" text-anchor="middle" font-size="11.5" font-weight="bold" fill="#4a4a4a" letter-spacing="0" stroke="#fff" stroke-width="2.5" stroke-linejoin="round" paint-order="stroke">BRUNEI</text><text transform="translate(1680.8,736.1) scale(0.92,1)" text-anchor="middle" font-size="10" font-weight="bold" fill="#6e6363" letter-spacing="1.1" stroke="#fff" stroke-width="2.5" stroke-linejoin="round" paint-order="stroke">NORTH</text><text transform="translate(1680.8,748.1) scale(0.92,1)" text-anchor="middle" font-size="10" font-weight="bold" fill="#6e6363" letter-spacing="1.1" stroke="#fff" stroke-width="2.5" stroke-linejoin="round" paint-order="stroke">SUMATRA</text><text transform="translate(1751.8,750.4) scale(0.92,1)" text-anchor="middle" font-size="10" font-weight="bold" fill="#6e6363" letter-spacing="1.1" stroke="#fff" stroke-width="2.5" stroke-linejoin="round" paint-order="stroke">WEST</text><text transform="translate(1751.8,762.4) scale(0.92,1)" text-anchor="middle" font-size="10" font-weight="bold" fill="#6e6363" letter-spacing="1.1" stroke="#fff" stroke-width="2.5" stroke-linejoin="round" paint-order="stroke">KALIMANTAN</text><text transform="translate(1854,745.8) scale(0.92,1)" text-anchor="middle" font-size="10" font-weight="bold" fill="#6e6363" letter-spacing="1.1" stroke="#fff" stroke-width="2.5" stroke-linejoin="round" paint-order="stroke">NORTH</text><text transform="translate(1854,757.8) scale(0.92,1)" text-anchor="middle" font-size="10" font-weight="bold" fill="#6e6363" letter-spacing="1.1" stroke="#fff" stroke-width="2.5" stroke-linejoin="round" paint-order="stroke">MALUKU</text><text transform="translate(1862.9,774.2) scale(0.92,1)" text-anchor="middle" font-size="10" font-weight="bold" fill="#6e6363" letter-spacing="1.1" stroke="#fff" stroke-width="2.5" stroke-linejoin="round" paint-order="stroke">MOLUCCAS</text><text transform="translate(1952.9,783.9) scale(0.88,1)" text-anchor="middle" font-size="14" font-weight="bold" fill="#454545" letter-spacing="0" stroke="#fff" stroke-width="2.5" stroke-linejoin="round" paint-order="stroke">PAPUA NEW</text><text transform="translate(1952.9,799.6) scale(0.88,1)" text-anchor="middle" font-size="14" font-weight="bold" fill="#454545" letter-spacing="0" stroke="#fff" stroke-width="2.5" stroke-linejoin="round" paint-order="stroke">GUINEA</text><text transform="translate(1753,794.9) scale(1.0,1)" text-anchor="middle" font-size="14.5" font-weight="normal" fill="#555555" letter-spacing="0" stroke="#fff" stroke-width="2.5" stroke-linejoin="round" paint-order="stroke">Jakarta</text><text transform="translate(1841.2,807.9) scale(0.9,1)" text-anchor="middle" font-size="11.5" font-weight="bold" fill="#4a4a4a" letter-spacing="0" stroke="#fff" stroke-width="2.5" stroke-linejoin="round" paint-order="stroke">EAST TIMOR</text><text transform="translate(2018.1,873.2) scale(1.0,1)" text-anchor="middle" font-size="11.5" font-weight="normal" fill="#a8badb" letter-spacing="2.4" font-style="italic" stroke="#fff" stroke-width="2.5" stroke-linejoin="round" paint-order="stroke">Coral</text><text transform="translate(2018.1,886.6) scale(1.0,1)" text-anchor="middle" font-size="11.5" font-weight="normal" fill="#a8badb" letter-spacing="2.4" font-style="italic" stroke="#fff" stroke-width="2.5" stroke-linejoin="round" paint-order="stroke">Sea</text><text transform="translate(1812,907.6) scale(0.92,1)" text-anchor="middle" font-size="10" font-weight="bold" fill="#6e6363" letter-spacing="1.1" stroke="#fff" stroke-width="2.5" stroke-linejoin="round" paint-order="stroke">WESTERN</text><text transform="translate(1812,919.6) scale(0.92,1)" text-anchor="middle" font-size="10" font-weight="bold" fill="#6e6363" letter-spacing="1.1" stroke="#fff" stroke-width="2.5" stroke-linejoin="round" paint-order="stroke">AUSTRALIA</text><text transform="translate(1895,911.9) scale(0.88,1)" text-anchor="middle" font-size="14" font-weight="bold" fill="#454545" letter-spacing="0" stroke="#fff" stroke-width="2.5" stroke-linejoin="round" paint-order="stroke">AUSTRALIA</text><text transform="translate(1900.7,944.3) scale(0.92,1)" text-anchor="middle" font-size="10" font-weight="bold" fill="#6e6363" letter-spacing="1.1" stroke="#fff" stroke-width="2.5" stroke-linejoin="round" paint-order="stroke">SOUTH</text><text transform="translate(1900.7,956.0) scale(0.92,1)" text-anchor="middle" font-size="10" font-weight="bold" fill="#6e6363" letter-spacing="1.1" stroke="#fff" stroke-width="2.5" stroke-linejoin="round" paint-order="stroke">AUSTRALIA</text><text transform="translate(1994.7,975.4) scale(1.0,1)" text-anchor="middle" font-size="14.5" font-weight="normal" fill="#555555" letter-spacing="0" stroke="#fff" stroke-width="2.5" stroke-linejoin="round" paint-order="stroke">Sydney</text><text transform="translate(1955.1,993.8) scale(0.92,1)" text-anchor="middle" font-size="10" font-weight="bold" fill="#6e6363" letter-spacing="1.1" stroke="#fff" stroke-width="2.5" stroke-linejoin="round" paint-order="stroke">VICTORIA</text><text transform="translate(2048.2,1014.1) scale(1.0,1)" text-anchor="middle" font-size="11.5" font-weight="normal" fill="#a8badb" letter-spacing="2.4" font-style="italic" stroke="#fff" stroke-width="2.5" stroke-linejoin="round" paint-order="stroke">Tasman</text><text transform="translate(2048.2,1027.8) scale(1.0,1)" text-anchor="middle" font-size="11.5" font-weight="normal" fill="#a8badb" letter-spacing="2.4" font-style="italic" stroke="#fff" stroke-width="2.5" stroke-linejoin="round" paint-order="stroke">Sea</text><text transform="translate(1967.2,1036.8) scale(0.92,1)" text-anchor="middle" font-size="10" font-weight="bold" fill="#6e6363" letter-spacing="1.1" stroke="#fff" stroke-width="2.5" stroke-linejoin="round" paint-order="stroke">TASMANIA</text><rect x="1080" y="256" width="32" height="63" rx="4" fill="#fff" style="filter:drop-shadow(0 1px 2px rgba(0,0,0,.15))"/><rect x="1080" y="328" width="32" height="32" rx="4" fill="#fff" style="filter:drop-shadow(0 1px 2px rgba(0,0,0,.15))"/><rect x="1080" y="368" width="32" height="32" rx="4" fill="#fff" style="filter:drop-shadow(0 1px 2px rgba(0,0,0,.15))"/><rect x="1080" y="408" width="32" height="32" rx="4" fill="#fff" style="filter:drop-shadow(0 1px 2px rgba(0,0,0,.15))"/><circle cx="1096.5" cy="272.6" r="7.5" fill="#343741"/><path d="M1096.5 268.6V276.6M1092.5 272.6H1100.5" stroke="#fff" stroke-width="1.4"/><circle cx="1096.5" cy="304.3" r="7.5" fill="#343741"/><path d="M1092.5 304.3H1100.5" stroke="#fff" stroke-width="1.4"/><circle cx="1096" cy="344.2" r="5.6" fill="none" stroke="#69707d" stroke-width="1" stroke-dasharray="3.2 1.2" stroke-dashoffset="1.6"/><path d="M1096 337.2V339.6M1096 348.8V351.2M1089 344.2H1091.4M1100.6 344.2H1103" stroke="#69707d" stroke-width="1"/><circle cx="1096" cy="344.2" r="0.9" fill="#69707d"/><path d="M1090 390L1102 378M1090 390V385.5M1090 390H1094.5M1102 378V382.5M1102 378H1097.5" fill="none" stroke="#343741" stroke-width="1.1"/><path d="M1094.2 416.3A4.6 4.6 0 0 0 1088.6 422.3L1091 420.1L1093.6 420.6L1094.1 423.2L1091.8 425.5A4.6 4.6 0 0 0 1097.6 419.8L1103.3 425.5Q1104.8 427.4 1103.3 429Q1101.7 430.6 1099.9 429L1094.2 423.3" fill="none" stroke="#343741" stroke-width="1.1" stroke-linejoin="round"/><circle cx="1101.4" cy="427.2" r="0.8" fill="#343741"/><path d="M2086 271.3H2099M2090 267H2099M2090 275.6H2099M2089 268.5L2085.5 271.3L2089 274" fill="none" stroke="#343741" stroke-width="1.1"/><text x="2108" y="1122" text-anchor="end" font-size="11" fill="#343741"><tspan font-weight="bold">zoom:</tspan> 2.09</text><text x="1727.8" y="1147" font-size="11.1" fill="#343741">Elastic Maps Service</text><text x="1847.8" y="1147" font-size="11.1" fill="#343741">, OpenMapTiles</text><text x="1942.3" y="1147" font-size="11.1" fill="#343741">, OpenStreetMap contributors</text><path d="M1841.5 1138.5H1837.5V1147.5H1846.5V1143.5M1841.5 1143L1846.5 1138M1843.0 1138H1846.5V1141.5" fill="none" stroke="#343741" stroke-width="0.9"/><path d="M1935.5 1138.5H1931.5V1147.5H1940.5V1143.5M1935.5 1143L1940.5 1138M1937.0 1138H1940.5V1141.5" fill="none" stroke="#343741" stroke-width="0.9"/><path d="M2101.5 1138.5H2097.5V1147.5H2106.5V1143.5M2101.5 1143L2106.5 1138M2103.0 1138H2106.5V1141.5" fill="none" stroke="#343741" stroke-width="0.9"/></svg>
<div class="ptitle" style="left:16px;top:1177px">User Activity</div>
<svg class="abs" style="left:8px;top:1195px" width="566" height="630" viewBox="8 1195 566 630" font-family="Liberation Sans, sans-serif"><circle cx="290.7" cy="1515.3" r="178" fill="none" stroke="#6dccb1" stroke-width="192"/><path d="M207.5 1732.5L317.5 1733.5L317.5 1766.5L207 1765.5Z" fill="#ff2600"/><text x="316" y="1759.5" font-size="16" font-weight="bold" fill="#000">100%</text></svg>
<div class="ptitle" style="left:590px;top:1177px">Device &amp; Operating System (via User-Agent)</div>
<div class="badge" style="left:859px;top:1174px;width:101px"><svg width="14" height="14" viewBox="0 0 14 14"><circle cx="7" cy="7" r="5.9" fill="none" stroke="#343741" stroke-width="0.9"/><path d="M3.2 5.5H10.8M4.6 7.5H9.4M6 9.5H8" stroke="#343741" stroke-width="0.85"/></svg><span>Panel filters</span></div>
<svg class="abs" style="left:582px;top:1195px" width="787" height="630" viewBox="582 1195 787 630" font-family="Liberation Sans, sans-serif"><circle cx="860" cy="1515.5" r="269.4" fill="#b9e6da"/><circle cx="860" cy="1515.5" r="179.6" fill="#95d9c6" stroke="#e6f5f0" stroke-width="1"/><circle cx="860" cy="1515.5" r="89.5" fill="#6dccb1" stroke="#d5efe7" stroke-width="1"/><text x="858" y="1585.5" text-anchor="middle" font-size="16" fill="#000">Mac <tspan font-weight="bold">100%</tspan></text><text x="858" y="1675.3" text-anchor="middle" font-size="16" fill="#000">Mac OS X <tspan font-weight="bold">100%</tspan></text><text x="858" y="1765.1" text-anchor="middle" font-size="16" fill="#000">10.15.7 <tspan font-weight="bold">100%</tspan></text><circle cx="1142.5" cy="1215.9" r="4" fill="#6dccb1"/><text x="1154.5" y="1219.7" font-size="12" fill="#343741">Mac</text><g fill="none" stroke="#69707d" stroke-width="0.9"><rect x="1349.6" y="1210.2" width="3" height="2" rx="0.8"/><rect x="1349.6" y="1214.8000000000002" width="3" height="2" rx="0.8" fill="#98a2b3"/><rect x="1349.6" y="1219.4" width="3" height="2" rx="0.8"/></g><circle cx="1152.5" cy="1237.9" r="4" fill="#95d9c6"/><text x="1164.5" y="1241.7" font-size="12" fill="#343741">Mac OS X</text><g fill="none" stroke="#69707d" stroke-width="0.9"><rect x="1349.6" y="1232.2" width="3" height="2" rx="0.8"/><rect x="1349.6" y="1236.8000000000002" width="3" height="2" rx="0.8" fill="#98a2b3"/><rect x="1349.6" y="1241.4" width="3" height="2" rx="0.8"/></g><circle cx="1162.5" cy="1259.9" r="4" fill="#b9e6da"/><text x="1174.5" y="1263.7" font-size="12" fill="#343741">10.15.7</text><g fill="none" stroke="#69707d" stroke-width="0.9"><rect x="1349.6" y="1254.2" width="3" height="2" rx="0.8"/><rect x="1349.6" y="1258.8000000000002" width="3" height="2" rx="0.8" fill="#98a2b3"/><rect x="1349.6" y="1263.4" width="3" height="2" rx="0.8"/></g></svg>
<div class="ptitle" style="left:1385px;top:1177px">User Agent Usage</div>
<div class="badge" style="left:1499px;top:1174px;width:101px"><svg width="14" height="14" viewBox="0 0 14 14"><circle cx="7" cy="7" r="5.9" fill="none" stroke="#343741" stroke-width="0.9"/><path d="M3.2 5.5H10.8M4.6 7.5H9.4M6 9.5H8" stroke="#343741" stroke-width="0.85"/></svg><span>Panel filters</span></div>
<svg class="abs" style="left:1377px;top:1195px" width="742" height="630" viewBox="1377 1195 742 630" font-family="Liberation Sans, sans-serif"><path d="M1632.7 1515.7L1632.70 1269.10A246.6 246.6 0 1 1 1394.20 1578.40Z" fill="#b9e6da" stroke="#fff" stroke-width="2"/><path d="M1632.7 1515.7L1394.20 1578.40A246.6 246.6 0 0 1 1632.70 1269.10Z" fill="#b9e6da" stroke="#fff" stroke-width="2"/><circle cx="1632.7" cy="1515.7" r="123.3" fill="#6dccb1" stroke="#fff" stroke-width="2"/><text x="1479.5" y="1362" font-size="16" fill="#000">109.0.0.0 <tspan font-weight="bold">29.09%</tspan></text><text x="1580" y="1616" font-size="16" fill="#000">Chrome <tspan font-weight="bold">100%</tspan></text><text x="1697" y="1649" font-size="16" fill="#000">107.0.0.0 <tspan font-weight="bold">70.91%</tspan></text><circle cx="1892.6" cy="1216.8" r="4" fill="#6dccb1"/><text x="1905" y="1220.6" font-size="12" fill="#343741">Chrome</text><g fill="none" stroke="#69707d" stroke-width="0.9"><rect x="2099.6" y="1211.1" width="3" height="2" rx="0.8"/><rect x="2099.6" y="1215.7" width="3" height="2" rx="0.8" fill="#98a2b3"/><rect x="2099.6" y="1220.3" width="3" height="2" rx="0.8"/></g><circle cx="1902.6" cy="1238.5" r="4" fill="#b9e6da"/><text x="1915" y="1242.3" font-size="12" fill="#343741">107.0.0.0</text><g fill="none" stroke="#69707d" stroke-width="0.9"><rect x="2099.6" y="1232.8" width="3" height="2" rx="0.8"/><rect x="2099.6" y="1237.4" width="3" height="2" rx="0.8" fill="#98a2b3"/><rect x="2099.6" y="1242.0" width="3" height="2" rx="0.8"/></g><circle cx="1902.6" cy="1260.2" r="4" fill="#b9e6da"/><text x="1915" y="1264.0" font-size="12" fill="#343741">109.0.0.0</text><g fill="none" stroke="#69707d" stroke-width="0.9"><rect x="2099.6" y="1254.5" width="3" height="2" rx="0.8"/><rect x="2099.6" y="1259.1000000000001" width="3" height="2" rx="0.8" fill="#98a2b3"/><rect x="2099.6" y="1263.7" width="3" height="2" rx="0.8"/></g></svg>
</body></html>
